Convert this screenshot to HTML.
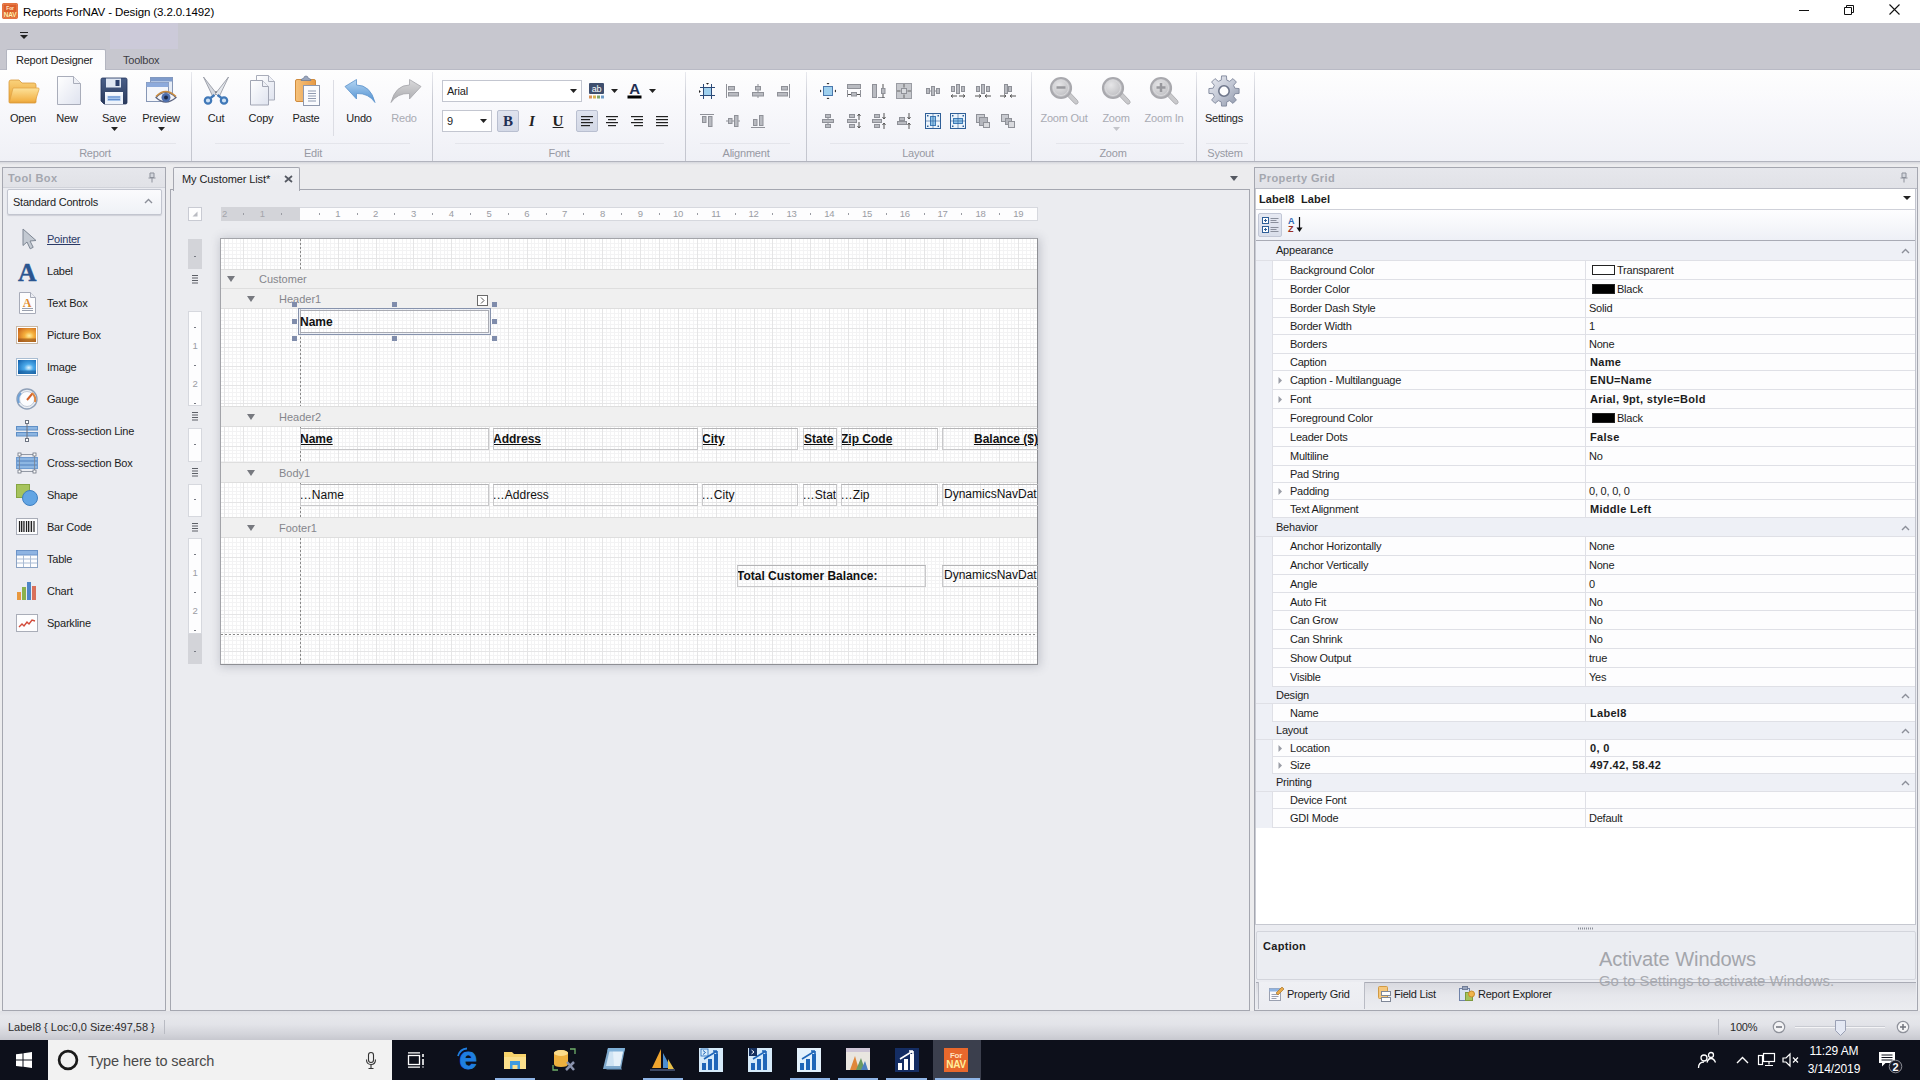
<!DOCTYPE html>
<html><head><meta charset="utf-8"><title>Reports ForNAV - Design</title>
<style>
*{box-sizing:border-box;margin:0;padding:0}
html,body{width:1920px;height:1080px;overflow:hidden;background:#ececee}
body{position:relative;font-family:"Liberation Sans",sans-serif;font-size:11px;color:#1e1e1e;letter-spacing:-0.22px}
div,svg{position:absolute}
svg{overflow:visible}
.t{height:16px;line-height:16px;white-space:nowrap}
.c{text-align:center}
.g{color:#9b9da6}
.b{font-weight:bold;letter-spacing:.3px}
.ar{font-family:"Liberation Sans",sans-serif;font-size:12px;letter-spacing:0;color:#111}
.bh{background:#f0f0f0;border-top:1px solid #dedede;border-bottom:1px solid #dedede}
.grid{background-color:#fff;background-image:linear-gradient(to right,#e3e3e5 1px,transparent 1px),linear-gradient(to bottom,#e3e3e5 1px,transparent 1px),linear-gradient(to right,#f3f3f5 1px,transparent 1px),linear-gradient(to bottom,#f3f3f5 1px,transparent 1px);background-size:18.9px 18.9px,18.9px 18.9px,3.78px 3.78px,3.78px 3.78px}
.fld{border:1px solid #c8c8ca;border-top-color:#b4b4b6}
.ar i{font-style:normal;letter-spacing:.6px}
.row{background:#fdfdfe;border-bottom:1px solid #dfe0e6}
.cat{background:#eef0f6;border-bottom:1px solid #dfe0e6}
</style></head>
<body>
<div style="left:0px;top:0px;width:1920px;height:23px;background:#fff"></div>
<svg style="left:2px;top:3px;" width="16" height="16" viewBox="0 0 16 16"><rect x="0" y="0" width="16" height="16" rx="2" fill="#dc5e2b"/><rect x="1" y="1" width="14" height="14" rx="1.5" fill="none" stroke="#ec8a58" stroke-width="1"/><text x="8" y="7" font-size="5" font-weight="bold" fill="#ffe9c8" text-anchor="middle" font-family="Liberation Sans,sans-serif">For</text><text x="8" y="13.5" font-size="6.5" font-weight="bold" fill="#fff3b0" text-anchor="middle" font-family="Liberation Sans,sans-serif">NAV</text></svg>
<div class="t" style="left:23px;top:3.5px;font-size:11.5px;letter-spacing:-0.1px;color:#000">Reports ForNAV - Design (3.2.0.1492)</div>
<svg style="left:1790px;top:-1px;" width="130" height="23" viewBox="0 0 130 23"><path d="M9 11.5H19" stroke="#111" stroke-width="1"/><path d="M54.5 8.5h7v7h-7zM56.5 8.5v-2h7v7h-2" fill="none" stroke="#111" stroke-width="1"/><path d="M99.5 5.5l10 10M109.5 5.5l-10 10" stroke="#111" stroke-width="1.1"/></svg>
<div style="left:0px;top:23px;width:1920px;height:46px;background:#c7c7cf"></div>
<div style="left:110px;top:23px;width:68px;height:26px;background:#cdcbdb;opacity:.8"></div>
<svg style="left:19px;top:31px;" width="10" height="8" viewBox="0 0 10 8"><path d="M1 1.5h8" stroke="#222" stroke-width="1"/><path d="M1 4h8l-4 4z" fill="#222"/></svg>
<div style="left:0px;top:69px;width:1920px;height:93px;background:linear-gradient(#fefefe 0%,#f9f9fc 35%,#eff0f6 100%);border-top:1px solid #b9bac5;border-bottom:1px solid #b2b4be"></div>
<div style="left:0px;top:162px;width:1920px;height:3px;background:linear-gradient(#d6d7dd,#ececee)"></div>
<div style="left:6px;top:49px;width:100px;height:21px;background:linear-gradient(#fbfbfd,#fdfdfe);border:1px solid #b3b5c0;border-bottom:none;border-radius:2px 2px 0 0"></div>
<div class="t" style="left:16px;top:52px;color:#222">Report Designer</div>
<div class="t" style="left:123px;top:52px;color:#3c3c44">Toolbox</div>
<div style="left:191px;top:72px;width:1px;height:89px;background:linear-gradient(#e9eaef,#c9cbd3 30%,#c4c6cf)"></div>
<div style="left:432px;top:72px;width:1px;height:89px;background:linear-gradient(#e9eaef,#c9cbd3 30%,#c4c6cf)"></div>
<div style="left:685px;top:72px;width:1px;height:89px;background:linear-gradient(#e9eaef,#c9cbd3 30%,#c4c6cf)"></div>
<div style="left:806px;top:72px;width:1px;height:89px;background:linear-gradient(#e9eaef,#c9cbd3 30%,#c4c6cf)"></div>
<div style="left:1031px;top:72px;width:1px;height:89px;background:linear-gradient(#e9eaef,#c9cbd3 30%,#c4c6cf)"></div>
<div style="left:1196px;top:72px;width:1px;height:89px;background:linear-gradient(#e9eaef,#c9cbd3 30%,#c4c6cf)"></div>
<div style="left:1254px;top:72px;width:1px;height:89px;background:linear-gradient(#e9eaef,#c9cbd3 30%,#c4c6cf)"></div>
<div class="t c" style="left:-5px;top:145px;width:200px;color:#9799a3">Report</div>
<div style="left:30px;top:143px;width:146px;height:1px;background:#e4e5eb"></div>
<div class="t c" style="left:213px;top:145px;width:200px;color:#9799a3">Edit</div>
<div style="left:215px;top:143px;width:195px;height:1px;background:#e4e5eb"></div>
<div class="t c" style="left:459px;top:145px;width:200px;color:#9799a3">Font</div>
<div style="left:455px;top:143px;width:209px;height:1px;background:#e4e5eb"></div>
<div class="t c" style="left:646px;top:145px;width:200px;color:#9799a3">Alignment</div>
<div style="left:700px;top:143px;width:90px;height:1px;background:#e4e5eb"></div>
<div class="t c" style="left:818px;top:145px;width:200px;color:#9799a3">Layout</div>
<div style="left:830px;top:143px;width:180px;height:1px;background:#e4e5eb"></div>
<div class="t c" style="left:1013px;top:145px;width:200px;color:#9799a3">Zoom</div>
<div style="left:1056px;top:143px;width:128px;height:1px;background:#e4e5eb"></div>
<div class="t c" style="left:1125px;top:145px;width:200px;color:#9799a3">System</div>
<div style="left:1206px;top:143px;width:42px;height:1px;background:#e4e5eb"></div>
<svg width="0" height="0" style="left:0;top:0"><defs>
<linearGradient id="gFold" x1="0" y1="0" x2="0" y2="1"><stop offset="0" stop-color="#f9d27c"/><stop offset="1" stop-color="#ea9c28"/></linearGradient>
<linearGradient id="gFold2" x1="0" y1="0" x2="0" y2="1"><stop offset="0" stop-color="#fde29a"/><stop offset="1" stop-color="#f2ae40"/></linearGradient>
<linearGradient id="gPage" x1="0" y1="0" x2="1" y2="1"><stop offset="0" stop-color="#ffffff"/><stop offset="1" stop-color="#dfe3ef"/></linearGradient>
<linearGradient id="gFlop" x1="0" y1="0" x2="0" y2="1"><stop offset="0" stop-color="#4a5f88"/><stop offset="1" stop-color="#2a3a5c"/></linearGradient>
<linearGradient id="gBlue" x1="0" y1="0" x2="0" y2="1"><stop offset="0" stop-color="#b5d6f3"/><stop offset="1" stop-color="#4f8fd0"/></linearGradient>
<linearGradient id="gGrey" x1="0" y1="0" x2="0" y2="1"><stop offset="0" stop-color="#d9d9db"/><stop offset="1" stop-color="#a9a9ad"/></linearGradient>
<linearGradient id="gGear" x1="0" y1="0" x2="1" y2="1"><stop offset="0" stop-color="#eceef4"/><stop offset=".5" stop-color="#c3c8d5"/><stop offset="1" stop-color="#8d95a9"/></linearGradient>
<linearGradient id="gClip" x1="0" y1="0" x2="1" y2="0"><stop offset="0" stop-color="#f6c27c"/><stop offset="1" stop-color="#e79a45"/></linearGradient>
<radialGradient id="gLens" cx=".4" cy=".35" r=".7"><stop offset="0" stop-color="#e6e6e8"/><stop offset="1" stop-color="#b9b9bd"/></radialGradient>
<radialGradient id="gPic" cx=".62" cy=".55" r=".75"><stop offset="0" stop-color="#fff0a0"/><stop offset=".35" stop-color="#f6b03c"/><stop offset="1" stop-color="#c9641c"/></radialGradient><radialGradient id="gImg" cx=".6" cy=".55" r=".75"><stop offset="0" stop-color="#e0f6ff"/><stop offset=".35" stop-color="#4aa9ea"/><stop offset="1" stop-color="#1565b0"/></radialGradient>
</defs></svg>
<svg style="left:8px;top:75px;" width="32" height="32" viewBox="0 0 32 32"><path d="M1 7q0-2 2-2h8l3 3h12q2 0 2 2v17q0 1-1 1H2q-1 0-1-1z" fill="url(#gFold)" stroke="#d99a3c" stroke-width=".8"/><path d="M5 13h25q1.5 0 1 1.5l-3.5 11q-.4 1.5-2 1.5H1.5z" fill="url(#gFold2)" stroke="#e2a548" stroke-width=".8"/></svg>
<div class="t c" style="left:-77px;top:110px;width:200px;color:#222">Open</div>
<svg style="left:51px;top:75px;" width="32" height="32" viewBox="0 0 32 32"><path d="M6.5 1.5h16l7 7v21h-23z" fill="url(#gPage)" stroke="#a9adba" stroke-width="1"/><path d="M22.5 1.5v7h7" fill="#eef0f6" stroke="#a9adba" stroke-width="1"/></svg>
<div class="t c" style="left:-33px;top:110px;width:200px;color:#222">New</div>
<svg style="left:98px;top:75px;" width="32" height="32" viewBox="0 0 32 32"><path d="M3 4.5q0-1.500 1.500-1.500h23q1.500 0 1.500 1.500v23q0 1.500-1.500 1.500h-21.500l-3-3z" fill="url(#gFlop)" stroke="#22325a" stroke-width=".8"/><rect x="8" y="3.500" width="15" height="9" fill="#dfe6f2"/><rect x="17.500" y="5" width="4" height="6" fill="#2b3f6b"/><rect x="7" y="17" width="18" height="12" fill="#eef3fb"/><rect x="7" y="17" width="18" height="3" fill="#f7f9fd"/><path d="M10 22h12M10 24.500h12" stroke="#5b7bb4" stroke-width="1.200"/><rect x="9.500" y="21" width="13" height="5" fill="#6b9fe0" opacity=".55"/></svg>
<div class="t c" style="left:14px;top:110px;width:200px;color:#222">Save</div>
<svg style="left:111px;top:127px;" width="7" height="4" viewBox="0 0 7 4"><path d="M0 0h7l-3.5 4z" fill="#222"/></svg>
<svg style="left:145px;top:75px;" width="32" height="32" viewBox="0 0 32 32"><rect x="5.500" y="2.500" width="22" height="19" fill="#e6ecf6" stroke="#8696b5"/><rect x="5.500" y="2.500" width="22" height="4" fill="#7f9bcb"/><rect x="1.500" y="7.500" width="22" height="19" fill="#f4f6fb" stroke="#8696b5"/><rect x="1.500" y="7.500" width="22" height="4.500" fill="#8daadb"/><path d="M11 22.500q9.500-10 20 0q-10.500 9-20 0z" fill="#f4f4f8" stroke="#5b6480" stroke-width="1.200"/><path d="M11 21.500q9.500-10 20 0" fill="none" stroke="#c98b3e" stroke-width="1.500"/><circle cx="21" cy="22.500" r="4.500" fill="#4d6fae"/><circle cx="21" cy="22.500" r="2" fill="#1c2a4a"/></svg>
<div class="t c" style="left:61px;top:110px;width:200px;color:#222">Preview</div>
<svg style="left:158px;top:127px;" width="7" height="4" viewBox="0 0 7 4"><path d="M0 0h7l-3.5 4z" fill="#222"/></svg>
<svg style="left:200px;top:75px;" width="32" height="32" viewBox="0 0 32 32"><path d="M3.500 2l13 16.500-3.500 3.500z" fill="#d6d9e0" stroke="#8e929d" stroke-width=".8"/><path d="M28.500 2l-13 16.500 3.500 3.500z" fill="#e4e7ec" stroke="#8e929d" stroke-width=".8"/><circle cx="16" cy="17" r="1" fill="#7b7f8a"/><circle cx="8" cy="25.500" r="3.200" fill="#cfe2f5" stroke="#4078b8" stroke-width="2.200"/><circle cx="24" cy="25.500" r="3.200" fill="#cfe2f5" stroke="#4078b8" stroke-width="2.200"/><path d="M10.500 23l4-3M21.500 23l-4-3" stroke="#4078b8" stroke-width="2.200"/></svg>
<div class="t c" style="left:116px;top:110px;width:200px;color:#222">Cut</div>
<svg style="left:245px;top:75px;" width="32" height="32" viewBox="0 0 32 32"><path d="M11.500 .500h12l6 6v18.500h-18z" fill="url(#gPage)" stroke="#a9adba"/><path d="M23.500 .500v6h6" fill="#eef0f6" stroke="#a9adba"/><path d="M5.500 5.500h12l6 6v18.500h-18z" fill="url(#gPage)" stroke="#a2a6b4"/><path d="M17.500 5.500v6h6" fill="#eef0f6" stroke="#a2a6b4"/></svg>
<div class="t c" style="left:161px;top:110px;width:200px;color:#222">Copy</div>
<svg style="left:292px;top:75px;" width="32" height="32" viewBox="0 0 32 32"><rect x="3.500" y="4.500" width="20" height="22" rx="1.500" fill="url(#gClip)" stroke="#d08c3e"/><path d="M9 5.500q0-2 2.500-2q.5-2.500 2.500-2.500t2.500 2.500q2.500 0 2.500 2z" fill="#9aa6bd" stroke="#6f7c96" stroke-width=".8"/><rect x="11.500" y="10.500" width="16" height="20" fill="#fafbfe" stroke="#8f98ad"/><path d="M16 16h8M16 18.500h8M16 21h8M16 23.500h8M16 26h8" stroke="#8f9ab0" stroke-width="1"/></svg>
<div class="t c" style="left:206px;top:110px;width:200px;color:#222">Paste</div>
<div style="left:333px;top:80px;width:1px;height:56px;background:#dcdde4"></div>
<svg style="left:344px;top:76px;" width="32" height="32" viewBox="0 0 32 32"><path d="M1 10.500L12.500 3.500v5.500q14 0 18.500 17.500q-6.500-9.500-18.500-9v5.500z" fill="url(#gBlue)" stroke="#5d93cc" stroke-width=".8"/></svg>
<div class="t c" style="left:259px;top:110px;width:200px;color:#222">Undo</div>
<svg style="left:390px;top:76px;" width="32" height="32" viewBox="0 0 32 32"><g transform="translate(32,0) scale(-1,1)"><path d="M1 10.500L12.500 3.500v5.500q14 0 18.500 17.500q-6.500-9.500-18.500-9v5.500z" fill="url(#gGrey)" stroke="#a5a5aa" stroke-width=".8"/></g></svg>
<div class="t c" style="left:304px;top:110px;width:200px;color:#a9abb3">Redo</div>
<svg style="left:1048px;top:75px;" width="32" height="32" viewBox="0 0 32 32"><path d="M18 19.500l3-3 8.500 9q1.500 2-.200 3.300q-1.600 1-2.900-.500z" fill="#c9c9cc" stroke="#a4a4a8" stroke-width=".8"/><circle cx="13" cy="13" r="10" fill="url(#gLens)" stroke="#a9a9ae" stroke-width="2.200"/><circle cx="13" cy="13" r="7.500" fill="none" stroke="#d9d9dc" stroke-width="1"/><path d="M8.500 12.500h9" stroke="#98989d" stroke-width="2.500"/></svg>
<div class="t c" style="left:964px;top:110px;width:200px;color:#a9abb3">Zoom Out</div>
<svg style="left:1100px;top:75px;" width="32" height="32" viewBox="0 0 32 32"><path d="M18 19.500l3-3 8.500 9q1.500 2-.200 3.300q-1.600 1-2.900-.500z" fill="#c9c9cc" stroke="#a4a4a8" stroke-width=".8"/><circle cx="13" cy="13" r="10" fill="url(#gLens)" stroke="#a9a9ae" stroke-width="2.200"/><circle cx="13" cy="13" r="7.500" fill="none" stroke="#d9d9dc" stroke-width="1"/></svg>
<div class="t c" style="left:1016px;top:110px;width:200px;color:#a9abb3">Zoom</div>
<svg style="left:1113px;top:127px;" width="7" height="4" viewBox="0 0 7 4"><path d="M0 0h7l-3.5 4z" fill="#c4c5cb"/></svg>
<svg style="left:1148px;top:75px;" width="32" height="32" viewBox="0 0 32 32"><path d="M18 19.500l3-3 8.500 9q1.500 2-.200 3.300q-1.600 1-2.900-.500z" fill="#c9c9cc" stroke="#a4a4a8" stroke-width=".8"/><circle cx="13" cy="13" r="10" fill="url(#gLens)" stroke="#a9a9ae" stroke-width="2.200"/><circle cx="13" cy="13" r="7.500" fill="none" stroke="#d9d9dc" stroke-width="1"/><path d="M8.500 12.500h9M13 8v9" stroke="#98989d" stroke-width="2.500"/></svg>
<div class="t c" style="left:1064px;top:110px;width:200px;color:#a9abb3">Zoom In</div>
<svg style="left:1208px;top:75px;" width="32" height="32" viewBox="0 0 32 32"><polygon points="13.23,5.15 13.56,0.90 18.44,0.90 18.77,5.15 21.71,6.37 24.96,3.60 28.40,7.04 25.63,10.29 26.85,13.23 31.10,13.56 31.10,18.44 26.85,18.77 25.63,21.71 28.40,24.96 24.96,28.40 21.71,25.63 18.77,26.85 18.44,31.10 13.56,31.10 13.23,26.85 10.29,25.63 7.04,28.40 3.60,24.96 6.37,21.71 5.15,18.77 0.90,18.44 0.90,13.56 5.15,13.23 6.37,10.29 3.60,7.04 7.04,3.60 10.29,6.37" fill="url(#gGear)" stroke="#7f879b" stroke-width=".9" stroke-linejoin="round"/><circle cx="16" cy="16" r="5.200" fill="#fdfdfe" stroke="#6f778b" stroke-width="1.600"/></svg>
<div class="t c" style="left:1124px;top:110px;width:200px;color:#222">Settings</div>
<div style="left:442px;top:80px;width:140px;height:22px;background:#fff;border:1px solid #c3c6d0"></div>
<div class="t" style="left:447px;top:83px;color:#222">Arial</div>
<svg style="left:570px;top:89px;" width="7" height="4" viewBox="0 0 7 4"><path d="M0 0h7l-3.500 4z" fill="#222"/></svg>
<div style="left:442px;top:110px;width:50px;height:22px;background:#fff;border:1px solid #c3c6d0"></div>
<div class="t" style="left:447px;top:113px;color:#222">9</div>
<svg style="left:480px;top:119px;" width="7" height="4" viewBox="0 0 7 4"><path d="M0 0h7l-3.500 4z" fill="#222"/></svg>
<svg style="left:589px;top:83px;" width="16" height="16" viewBox="0 0 16 16"><rect x="0" y="0" width="15" height="11" rx="1" fill="#3f4f6e"/><text x="7.500" y="8.500" font-size="9" fill="#fff" text-anchor="middle" font-family="Liberation Sans,sans-serif">ab</text><rect x="0" y="12.500" width="3" height="3" fill="#d9935a"/><rect x="4" y="12.500" width="3" height="3" fill="#d8b24f"/><rect x="8" y="12.500" width="3" height="3" fill="#7fa56a"/><rect x="12" y="12.500" width="3" height="3" fill="#6d9bc6"/></svg>
<svg style="left:611px;top:89px;" width="7" height="4" viewBox="0 0 7 4"><path d="M0 0h7l-3.500 4z" fill="#222"/></svg>
<svg style="left:627px;top:82px;" width="16" height="18" viewBox="0 0 16 18"><text x="7.500" y="12" font-size="15" font-weight="bold" fill="#1f2f52" text-anchor="middle" font-family="Liberation Sans,sans-serif">A</text><rect x="0.500" y="13.500" width="14" height="3" fill="#000"/></svg>
<svg style="left:649px;top:89px;" width="7" height="4" viewBox="0 0 7 4"><path d="M0 0h7l-3.500 4z" fill="#222"/></svg>
<div style="left:497px;top:110px;width:22px;height:22px;background:linear-gradient(#dfe3ee,#d3d8e6);border:1px solid #b9bfd0;border-radius:2px"></div>
<div class="t c" style="left:497px;top:113px;width:22px;font-family:'Liberation Serif',serif;font-weight:bold;font-size:15px;color:#1f2f55;letter-spacing:0">B</div>
<div class="t c" style="left:521px;top:113px;width:22px;font-family:'Liberation Serif',serif;font-weight:bold;font-style:italic;font-size:15px;color:#222;letter-spacing:0">I</div>
<div class="t c" style="left:547px;top:113px;width:22px;font-family:'Liberation Serif',serif;font-weight:bold;font-size:15px;color:#222;text-decoration:underline;letter-spacing:0">U</div>
<div style="left:576px;top:110px;width:22px;height:22px;background:linear-gradient(#dfe3ee,#d3d8e6);border:1px solid #b9bfd0;border-radius:2px"></div>
<svg style="left:581px;top:116px;" width="12" height="11" viewBox="0 0 12 11"><rect x="0" y="0" width="12" height="1.200" fill="#222"/><rect x="0" y="3" width="9" height="1.200" fill="#222"/><rect x="0" y="6" width="12" height="1.200" fill="#222"/><rect x="0" y="9" width="9" height="1.200" fill="#222"/></svg>
<svg style="left:606px;top:116px;" width="12" height="11" viewBox="0 0 12 11"><rect x="0" y="0" width="12" height="1.200" fill="#222"/><rect x="2" y="3" width="8" height="1.200" fill="#222"/><rect x="0" y="6" width="12" height="1.200" fill="#222"/><rect x="2" y="9" width="8" height="1.200" fill="#222"/></svg>
<svg style="left:631px;top:116px;" width="12" height="11" viewBox="0 0 12 11"><rect x="0" y="0" width="12" height="1.200" fill="#222"/><rect x="3" y="3" width="9" height="1.200" fill="#222"/><rect x="0" y="6" width="12" height="1.200" fill="#222"/><rect x="3" y="9" width="9" height="1.200" fill="#222"/></svg>
<svg style="left:656px;top:116px;" width="12" height="11" viewBox="0 0 12 11"><rect x="0" y="0" width="12" height="1.200" fill="#222"/><rect x="0" y="3" width="12" height="1.200" fill="#222"/><rect x="0" y="6" width="12" height="1.200" fill="#222"/><rect x="0" y="9" width="12" height="1.200" fill="#222"/></svg>
<svg style="left:699px;top:83px;" width="16" height="16" viewBox="0 0 16 16"><rect x="4.500" y="4.500" width="8" height="8" fill="#9fd0ee"/><path d="M4.500 1v15M12.500 1v15M1 4.500h15M1 12.500h15" stroke="#2b4a78" stroke-width="1" fill="none"/><path d="M7 0h3l-1.500 1.800zM0 7v3l1.800-1.500z" fill="#222"/></svg>
<svg style="left:725px;top:83px;" width="16" height="16" viewBox="0 0 16 16"><path d="M1.500 1v14" stroke="#8f9198" stroke-width="1" fill="none"/><rect x="3.5" y="3.5" width="6" height="3.5" fill="#b9bbc1" stroke="#8f9198" stroke-width="1"/><rect x="3.5" y="9.5" width="10" height="3.5" fill="#b9bbc1" stroke="#8f9198" stroke-width="1"/></svg>
<svg style="left:750px;top:83px;" width="16" height="16" viewBox="0 0 16 16"><path d="M8 1v14" stroke="#8f9198" stroke-width="1" fill="none"/><rect x="5.5" y="3.5" width="5" height="3.5" fill="#b9bbc1" stroke="#8f9198" stroke-width="1"/><rect x="2.5" y="9.5" width="11" height="3.5" fill="#b9bbc1" stroke="#8f9198" stroke-width="1"/></svg>
<svg style="left:775px;top:83px;" width="16" height="16" viewBox="0 0 16 16"><path d="M14.500 1v14" stroke="#8f9198" stroke-width="1" fill="none"/><rect x="6.5" y="3.5" width="6" height="3.5" fill="#b9bbc1" stroke="#8f9198" stroke-width="1"/><rect x="2.5" y="9.5" width="10" height="3.5" fill="#b9bbc1" stroke="#8f9198" stroke-width="1"/></svg>
<svg style="left:699px;top:113px;" width="16" height="16" viewBox="0 0 16 16"><path d="M1 1.500h14" stroke="#8f9198" stroke-width="1" fill="none"/><rect x="3.5" y="3.5" width="3.5" height="6" fill="#b9bbc1" stroke="#8f9198" stroke-width="1"/><rect x="9.5" y="3.5" width="3.5" height="10" fill="#b9bbc1" stroke="#8f9198" stroke-width="1"/></svg>
<svg style="left:725px;top:113px;" width="16" height="16" viewBox="0 0 16 16"><path d="M1 8h14" stroke="#8f9198" stroke-width="1" fill="none"/><rect x="3.5" y="5.5" width="3.5" height="5" fill="#b9bbc1" stroke="#8f9198" stroke-width="1"/><rect x="9.5" y="2.5" width="3.5" height="11" fill="#b9bbc1" stroke="#8f9198" stroke-width="1"/></svg>
<svg style="left:750px;top:113px;" width="16" height="16" viewBox="0 0 16 16"><path d="M1 14.500h14" stroke="#8f9198" stroke-width="1" fill="none"/><rect x="3.5" y="6.5" width="3.5" height="6" fill="#b9bbc1" stroke="#8f9198" stroke-width="1"/><rect x="9.5" y="2.5" width="3.5" height="10" fill="#b9bbc1" stroke="#8f9198" stroke-width="1"/></svg>
<svg style="left:820px;top:83px;" width="16" height="16" viewBox="0 0 16 16"><rect x="3.500" y="3.500" width="9" height="9" fill="#9fd0ee" stroke="#4a78ad" stroke-width="1"/><path d="M6.500 0h3l-1.500 1.500zM6.500 16h3l-1.500-1.500zM0 6.500v3l1.500-1.500zM16 6.500v3l-1.500-1.500z" fill="#222"/></svg>
<svg style="left:846px;top:83px;" width="16" height="16" viewBox="0 0 16 16"><rect x="1.5" y="1.5" width="13" height="4" fill="#b9bbc1" stroke="#8f9198" stroke-width="1"/><path d="M1.500 7v7M14.500 7v7" stroke="#8f9198" stroke-width="1" fill="none"/><rect x="5.5" y="9.5" width="5" height="3.5" fill="#b9bbc1" stroke="#8f9198" stroke-width="1"/><path d="M2 11.500h3M14 11.500h-3" stroke="#555" stroke-width="1" fill="none"/></svg>
<svg style="left:871px;top:83px;" width="16" height="16" viewBox="0 0 16 16"><rect x="1.5" y="1.5" width="4" height="13" fill="#b9bbc1" stroke="#8f9198" stroke-width="1"/><path d="M7 14.500h7" stroke="#8f9198" stroke-width="1" fill="none"/><rect x="10.5" y="5.5" width="3.5" height="5" fill="#b9bbc1" stroke="#8f9198" stroke-width="1"/><path d="M12 1v4M12 15v-4" stroke="#555" stroke-width="1" fill="none"/></svg>
<svg style="left:896px;top:83px;" width="16" height="16" viewBox="0 0 16 16"><rect x="0.5" y="0.5" width="15" height="15" fill="#c6c8cd" stroke="#9a9ca3" stroke-width="1"/><rect x="5.5" y="5.5" width="5" height="5" fill="#d8dade" stroke="#8f9198" stroke-width="1"/><path d="M8 1v3.500M8 15v-3.500M1 8h3.500M15 8h-3.500" stroke="#666" stroke-width="1" fill="none"/></svg>
<svg style="left:925px;top:83px;" width="16" height="16" viewBox="0 0 16 16"><path d="M1 8h14" stroke="#8f9198" stroke-width="1" fill="none"/><rect x="1.5" y="5.5" width="3" height="5" fill="#b9bbc1" stroke="#8f9198" stroke-width="1"/><rect x="6.5" y="3.5" width="3" height="9" fill="#b9bbc1" stroke="#8f9198" stroke-width="1"/><rect x="11.5" y="5.5" width="3" height="5" fill="#b9bbc1" stroke="#8f9198" stroke-width="1"/></svg>
<svg style="left:950px;top:83px;" width="16" height="16" viewBox="0 0 16 16"><rect x="1.5" y="3.5" width="3" height="5" fill="#b9bbc1" stroke="#8f9198" stroke-width="1"/><rect x="6.5" y="1.5" width="3" height="9" fill="#b9bbc1" stroke="#8f9198" stroke-width="1"/><rect x="11.5" y="3.5" width="3" height="5" fill="#b9bbc1" stroke="#8f9198" stroke-width="1"/><path d="M1 13h6M15 13h-6M3 11.500l-2 1.500 2 1.500M13 11.500l2 1.500-2 1.500" stroke="#555" stroke-width="1" fill="none"/></svg>
<svg style="left:975px;top:83px;" width="16" height="16" viewBox="0 0 16 16"><rect x="1.5" y="3.5" width="3" height="5" fill="#b9bbc1" stroke="#8f9198" stroke-width="1"/><rect x="6.5" y="1.5" width="3" height="9" fill="#b9bbc1" stroke="#8f9198" stroke-width="1"/><rect x="11.5" y="3.5" width="3" height="5" fill="#b9bbc1" stroke="#8f9198" stroke-width="1"/><path d="M0 13h6M16 13h-6M4 11.500l2 1.500-2 1.500M12 11.500l-2 1.500 2 1.500" stroke="#555" stroke-width="1" fill="none"/></svg>
<svg style="left:1000px;top:83px;" width="16" height="16" viewBox="0 0 16 16"><rect x="4.5" y="1.5" width="3" height="9" fill="#b9bbc1" stroke="#8f9198" stroke-width="1"/><rect x="8.5" y="3.5" width="3" height="5" fill="#b9bbc1" stroke="#8f9198" stroke-width="1"/><path d="M0 13h6M16 13h-6M4 11.500l2 1.500-2 1.500M12 11.500l-2 1.500 2 1.500" stroke="#555" stroke-width="1" fill="none"/></svg>
<svg style="left:820px;top:113px;" width="16" height="16" viewBox="0 0 16 16"><path d="M8 1v14" stroke="#8f9198" stroke-width="1" fill="none"/><rect x="5.5" y="1.5" width="5" height="3" fill="#b9bbc1" stroke="#8f9198" stroke-width="1"/><rect x="2.5" y="6.5" width="11" height="3" fill="#b9bbc1" stroke="#8f9198" stroke-width="1"/><rect x="5.5" y="11.5" width="5" height="3" fill="#b9bbc1" stroke="#8f9198" stroke-width="1"/></svg>
<svg style="left:846px;top:113px;" width="16" height="16" viewBox="0 0 16 16"><rect x="3.5" y="1.5" width="5" height="3" fill="#b9bbc1" stroke="#8f9198" stroke-width="1"/><rect x="1.5" y="6.5" width="9" height="3" fill="#b9bbc1" stroke="#8f9198" stroke-width="1"/><rect x="3.5" y="11.5" width="5" height="3" fill="#b9bbc1" stroke="#8f9198" stroke-width="1"/><path d="M13 1v6M13 15v-6M11.500 3l1.500-2 1.500 2M11.500 13l1.500 2 1.500-2" stroke="#555" stroke-width="1" fill="none"/></svg>
<svg style="left:871px;top:113px;" width="16" height="16" viewBox="0 0 16 16"><rect x="3.5" y="1.5" width="5" height="3" fill="#b9bbc1" stroke="#8f9198" stroke-width="1"/><rect x="1.5" y="6.5" width="9" height="3" fill="#b9bbc1" stroke="#8f9198" stroke-width="1"/><rect x="3.5" y="11.5" width="5" height="3" fill="#b9bbc1" stroke="#8f9198" stroke-width="1"/><path d="M13 0v6M13 16v-6M11.500 4l1.500 2 1.500-2M11.500 12l1.500-2 1.500 2" stroke="#555" stroke-width="1" fill="none"/></svg>
<svg style="left:896px;top:113px;" width="16" height="16" viewBox="0 0 16 16"><rect x="3.5" y="4.5" width="5" height="3" fill="#b9bbc1" stroke="#8f9198" stroke-width="1"/><rect x="1.5" y="8.5" width="9" height="3" fill="#b9bbc1" stroke="#8f9198" stroke-width="1"/><path d="M13 0v6M13 16v-6M11.500 4l1.500 2 1.500-2M11.500 12l1.500-2 1.500 2" stroke="#555" stroke-width="1" fill="none"/></svg>
<svg style="left:925px;top:113px;" width="16" height="16" viewBox="0 0 16 16"><rect x="0.5" y="0.5" width="15" height="15" fill="#eaf3fb" stroke="#2f5f98" stroke-width="1"/><rect x="5.5" y="3.5" width="5" height="9" fill="#8ec3ea" stroke="#3e7ab5" stroke-width="1"/><path d="M8 1v14M1 8h14" stroke="#2f5f98" stroke-width="0.600" fill="none"/><path d="M2 2h1.500v1.500h-1.500zM12.500 2h1.500v1.500h-1.500zM2 12.500h1.500v1.500h-1.500zM12.500 12.500h1.500v1.500h-1.500z" fill="#2f5f98"/></svg>
<svg style="left:950px;top:113px;" width="16" height="16" viewBox="0 0 16 16"><rect x="0.5" y="0.5" width="15" height="15" fill="#eaf3fb" stroke="#2f5f98" stroke-width="1"/><rect x="3.5" y="5.5" width="9" height="5" fill="#8ec3ea" stroke="#3e7ab5" stroke-width="1"/><path d="M8 1v14M1 8h14" stroke="#2f5f98" stroke-width="0.600" fill="none"/><path d="M2 2h1.500v1.500h-1.500zM12.500 2h1.500v1.500h-1.500zM2 12.500h1.500v1.500h-1.500zM12.500 12.500h1.500v1.500h-1.500z" fill="#2f5f98"/></svg>
<svg style="left:975px;top:113px;" width="16" height="16" viewBox="0 0 16 16"><rect x="1.5" y="1.5" width="8" height="8" fill="#c9cbd1" stroke="#8f9198" stroke-width="1"/><rect x="4.5" y="4.5" width="8" height="8" fill="#b4b6bd" stroke="#8f9198" stroke-width="1"/><rect x="8.5" y="9.5" width="6" height="5" fill="#d9dade" stroke="#8f9198" stroke-width="1"/></svg>
<svg style="left:1000px;top:113px;" width="16" height="16" viewBox="0 0 16 16"><rect x="1.5" y="1.5" width="7" height="7" fill="#c9cbd1" stroke="#8f9198" stroke-width="1"/><rect x="5.5" y="5.5" width="6" height="6" fill="#b4b6bd" stroke="#8f9198" stroke-width="1"/><rect x="8.5" y="8.5" width="6" height="6" fill="#d9dade" stroke="#8f9198" stroke-width="1"/></svg>
<div style="left:2px;top:167px;width:164px;height:844px;background:#ebecf1;border:1px solid #a5a7b0"></div>
<div style="left:3px;top:168px;width:162px;height:20px;background:linear-gradient(#e6e7ec,#e1e2e7);border-bottom:1px solid #d0d2d9"></div>
<div class="t" style="left:8px;top:170px;font-weight:bold;color:#a4a7af;letter-spacing:.4px">Tool Box</div>
<svg style="left:148px;top:173px;" width="8" height="10" viewBox="0 0 8 10"><path d="M2 0h4v4.500h-4zM0.500 5h7M4 5v4.500" stroke="#8d919b" stroke-width="1" fill="#d3d6dd"/></svg>
<div style="left:7px;top:189px;width:155px;height:26px;background:linear-gradient(#fbfbfd,#eff1f6);border:1px solid #c2c5cf;border-radius:2px;box-shadow:0 1px 1px rgba(120,125,140,.25)"></div>
<div class="t" style="left:13px;top:194px;color:#1c1c1c">Standard Controls</div>
<svg style="left:144px;top:198px;" width="9" height="6" viewBox="0 0 9 6"><path d="M1 5l3.500-3.500 3.500 3.500" stroke="#8c8f99" stroke-width="1.400" fill="none"/></svg>
<svg style="left:16px;top:228px;" width="22" height="22" viewBox="0 0 22 22"><path d="M7 1l0 16.500 4-3.500 3.200 6.800 3-1.500-3.200-6.300 6-.500z" fill="#c3c9d2" stroke="#7e8794" stroke-width="1"/></svg>
<div class="t" style="left:47px;top:231px;color:#2b3a66;text-decoration:underline">Pointer</div>
<svg style="left:16px;top:261px;" width="22" height="22" viewBox="0 0 22 22"><text x="11" y="20" font-size="25.500" font-weight="bold" fill="#2a5590" stroke="#2a5590" stroke-width=".5" text-anchor="middle" font-family="Liberation Serif,serif">A</text></svg>
<div class="t" style="left:47px;top:263px;color:#1c1c1c">Label</div>
<svg style="left:16px;top:292px;" width="22" height="22" viewBox="0 0 22 22"><path d="M3.500 .500h11l5 5v16h-16z" fill="#fdfdfe" stroke="#a7abb8"/><path d="M14.500 .500v5h5" fill="#eceef4" stroke="#a7abb8"/><text x="11" y="14.500" font-size="12" font-weight="bold" fill="#e08a2e" text-anchor="middle" font-family="Liberation Serif,serif">A</text><path d="M6 16.500h11M6 18.500h11" stroke="#9aa0ae" stroke-width="1"/></svg>
<div class="t" style="left:47px;top:295px;color:#1c1c1c">Text Box</div>
<svg style="left:16px;top:324px;" width="22" height="22" viewBox="0 0 22 22"><rect x="0.500" y="2.500" width="21" height="17" fill="#fff" stroke="#c9b9a6"/><rect x="2" y="4" width="18" height="14" fill="url(#gPic)"/><rect x="2" y="14.500" width="18" height="3.500" fill="#8a4a18" opacity=".55"/></svg>
<div class="t" style="left:47px;top:327px;color:#1c1c1c">Picture Box</div>
<svg style="left:16px;top:356px;" width="22" height="22" viewBox="0 0 22 22"><rect x="0.500" y="2.500" width="21" height="17" fill="#fff" stroke="#a9bdd2"/><rect x="2" y="4" width="18" height="14" fill="url(#gImg)"/><rect x="2" y="14.500" width="18" height="3.500" fill="#0f4f8e" opacity=".5"/></svg>
<div class="t" style="left:47px;top:359px;color:#1c1c1c">Image</div>
<svg style="left:16px;top:388px;" width="22" height="22" viewBox="0 0 22 22"><circle cx="11" cy="11" r="10" fill="#e9edf3" stroke="#8fa0b8" stroke-width="1.400"/><circle cx="11" cy="11" r="7.500" fill="#fbfcfe" stroke="#c3cbd8"/><path d="M11 12l5.500-6.500" stroke="#d5622a" stroke-width="2"/><path d="M3 15a9 9 0 0 1 2-10" stroke="#6da0d6" stroke-width="2" fill="none"/><path d="M16 5a9 9 0 0 1 3 9" stroke="#e0853e" stroke-width="2" fill="none"/></svg>
<div class="t" style="left:47px;top:391px;color:#1c1c1c">Gauge</div>
<svg style="left:16px;top:420px;" width="22" height="22" viewBox="0 0 22 22"><rect x="0.500" y="6.500" width="21" height="3.500" fill="#8db6e2" stroke="#5f8fc6"/><rect x="0.500" y="12.500" width="21" height="3.500" fill="#8db6e2" stroke="#5f8fc6"/><path d="M11 2v18" stroke="#6c7380" stroke-width="1"/><rect x="9.500" y="0.500" width="3" height="3" fill="#fff" stroke="#6c7380"/><rect x="9.500" y="18.500" width="3" height="3" fill="#fff" stroke="#6c7380"/></svg>
<div class="t" style="left:47px;top:423px;color:#1c1c1c">Cross-section Line</div>
<svg style="left:16px;top:452px;" width="22" height="22" viewBox="0 0 22 22"><rect x="0.500" y="5.500" width="21" height="3" fill="#8db6e2" stroke="#6f9bd0"/><rect x="0.500" y="9.500" width="21" height="3" fill="#8db6e2" stroke="#6f9bd0"/><rect x="0.500" y="13.500" width="21" height="3" fill="#8db6e2" stroke="#6f9bd0"/><path d="M3 2.500h16M3 19.500h16M3.500 3v16M18.500 3v16" stroke="#7c8492" stroke-width=".8" fill="none"/><rect x="2" y="1" width="3" height="3" fill="#fff" stroke="#6c7380" stroke-width=".8"/><rect x="17" y="1" width="3" height="3" fill="#fff" stroke="#6c7380" stroke-width=".8"/><rect x="2" y="18" width="3" height="3" fill="#fff" stroke="#6c7380" stroke-width=".8"/><rect x="17" y="18" width="3" height="3" fill="#fff" stroke="#6c7380" stroke-width=".8"/></svg>
<div class="t" style="left:47px;top:455px;color:#1c1c1c">Cross-section Box</div>
<svg style="left:16px;top:484px;" width="22" height="22" viewBox="0 0 22 22"><rect x="0.500" y="0.500" width="13" height="13" fill="#a6c35c" stroke="#86a542"/><circle cx="14" cy="14" r="7.500" fill="#62a5e4" stroke="#3f7fc0"/></svg>
<div class="t" style="left:47px;top:487px;color:#1c1c1c">Shape</div>
<svg style="left:16px;top:516px;" width="22" height="22" viewBox="0 0 22 22"><rect x="0.500" y="2.500" width="21" height="16" fill="#fdfdfe" stroke="#a9adb8"/><path d="M3.500 5v11M5.500 5v11M8 5v11M10.500 5v11M12.500 5v11M15.500 5v11M18 5v11" stroke="#222" stroke-width="1.200"/><path d="M7 5v11M14 5v11" stroke="#222" stroke-width=".600"/></svg>
<div class="t" style="left:47px;top:519px;color:#1c1c1c">Bar Code</div>
<svg style="left:16px;top:548px;" width="22" height="22" viewBox="0 0 22 22"><rect x="0.500" y="2.500" width="21" height="17" fill="#fdfdfe" stroke="#8ba3c4"/><rect x="0.500" y="2.500" width="21" height="4.500" fill="#8fb4e2" stroke="#6b93c8"/><path d="M7.500 7v12M14.500 7v12M1 11h20M1 15h20" stroke="#a9bbd4" stroke-width="1"/></svg>
<div class="t" style="left:47px;top:551px;color:#1c1c1c">Table</div>
<svg style="left:16px;top:580px;" width="22" height="22" viewBox="0 0 22 22"><rect x="1" y="12" width="4" height="8" fill="#e8983f"/><rect x="6" y="7" width="4" height="13" fill="#8bb24c"/><rect x="11" y="2" width="4" height="18" fill="#4f86c6"/><rect x="16" y="6" width="4" height="14" fill="#d9705a"/></svg>
<div class="t" style="left:47px;top:583px;color:#1c1c1c">Chart</div>
<svg style="left:16px;top:612px;" width="22" height="22" viewBox="0 0 22 22"><rect x="0.500" y="2.500" width="21" height="17" fill="#fdfdfe" stroke="#a9adb8"/><path d="M3 15l3-3 2 2 3-4 2 2 3-4 3 1" stroke="#d24a3a" stroke-width="1.400" fill="none"/></svg>
<div class="t" style="left:47px;top:615px;color:#1c1c1c">Sparkline</div>
<div style="left:170px;top:189px;width:1080px;height:822px;background:#ebecf0;border:1px solid #a5a7b0"></div>
<div style="left:173px;top:167px;width:127px;height:24px;background:linear-gradient(#f0f1f4,#ebecf0 60%);border:1px solid #a5a7b0;border-bottom:none;border-radius:2px 2px 0 0"></div>
<div class="t" style="left:182px;top:171px;color:#1c1c1c;letter-spacing:-0.1px">My Customer List*</div>
<svg style="left:284px;top:175px;" width="9" height="8" viewBox="0 0 9 8"><path d="M1 1l7 6M8 1l-7 6" stroke="#555962" stroke-width="1.700"/></svg>
<svg style="left:1230px;top:176px;" width="8" height="5" viewBox="0 0 8 5"><path d="M0 0h8l-4 5z" fill="#555962"/></svg>
<div style="left:188px;top:207px;width:14px;height:14px;background:#fdfdfe;border:1px solid #c9cbd3"></div>
<svg style="left:192px;top:211px;" width="6" height="6" viewBox="0 0 6 6"><path d="M5.500 .500v5h-5z" fill="#b9bbc2"/></svg>
<div style="left:221px;top:207px;width:817px;height:14px;background:#fdfdfe;border:1px solid #d6d8de"></div>
<div style="left:221px;top:207px;width:79px;height:14px;background:#d3d4d9"></div>
<div class="t c" style="left:214.4px;top:206px;width:20px;font-size:9.500px;color:#a3a5ab;letter-spacing:-0.3px">2</div>
<div style="left:243px;top:213px;width:1px;height:2px;background:#9a9ca3"></div>
<div class="t c" style="left:252.2px;top:206px;width:20px;font-size:9.500px;color:#a3a5ab;letter-spacing:-0.3px">1</div>
<div style="left:281px;top:213px;width:1px;height:2px;background:#9a9ca3"></div>
<div style="left:319px;top:213px;width:1px;height:2px;background:#9a9ca3"></div>
<div class="t c" style="left:327.8px;top:206px;width:20px;font-size:9.500px;color:#9a9ca3;letter-spacing:-0.3px">1</div>
<div style="left:357px;top:213px;width:1px;height:2px;background:#9a9ca3"></div>
<div class="t c" style="left:365.6px;top:206px;width:20px;font-size:9.500px;color:#9a9ca3;letter-spacing:-0.3px">2</div>
<div style="left:394px;top:213px;width:1px;height:2px;background:#9a9ca3"></div>
<div class="t c" style="left:403.4px;top:206px;width:20px;font-size:9.500px;color:#9a9ca3;letter-spacing:-0.3px">3</div>
<div style="left:432px;top:213px;width:1px;height:2px;background:#9a9ca3"></div>
<div class="t c" style="left:441.2px;top:206px;width:20px;font-size:9.500px;color:#9a9ca3;letter-spacing:-0.3px">4</div>
<div style="left:470px;top:213px;width:1px;height:2px;background:#9a9ca3"></div>
<div class="t c" style="left:479.0px;top:206px;width:20px;font-size:9.500px;color:#9a9ca3;letter-spacing:-0.3px">5</div>
<div style="left:508px;top:213px;width:1px;height:2px;background:#9a9ca3"></div>
<div class="t c" style="left:516.8px;top:206px;width:20px;font-size:9.500px;color:#9a9ca3;letter-spacing:-0.3px">6</div>
<div style="left:546px;top:213px;width:1px;height:2px;background:#9a9ca3"></div>
<div class="t c" style="left:554.6px;top:206px;width:20px;font-size:9.500px;color:#9a9ca3;letter-spacing:-0.3px">7</div>
<div style="left:583px;top:213px;width:1px;height:2px;background:#9a9ca3"></div>
<div class="t c" style="left:592.4px;top:206px;width:20px;font-size:9.500px;color:#9a9ca3;letter-spacing:-0.3px">8</div>
<div style="left:621px;top:213px;width:1px;height:2px;background:#9a9ca3"></div>
<div class="t c" style="left:630.2px;top:206px;width:20px;font-size:9.500px;color:#9a9ca3;letter-spacing:-0.3px">9</div>
<div style="left:659px;top:213px;width:1px;height:2px;background:#9a9ca3"></div>
<div class="t c" style="left:668.0px;top:206px;width:20px;font-size:9.500px;color:#9a9ca3;letter-spacing:-0.3px">10</div>
<div style="left:697px;top:213px;width:1px;height:2px;background:#9a9ca3"></div>
<div class="t c" style="left:705.8px;top:206px;width:20px;font-size:9.500px;color:#9a9ca3;letter-spacing:-0.3px">11</div>
<div style="left:735px;top:213px;width:1px;height:2px;background:#9a9ca3"></div>
<div class="t c" style="left:743.6px;top:206px;width:20px;font-size:9.500px;color:#9a9ca3;letter-spacing:-0.3px">12</div>
<div style="left:772px;top:213px;width:1px;height:2px;background:#9a9ca3"></div>
<div class="t c" style="left:781.4px;top:206px;width:20px;font-size:9.500px;color:#9a9ca3;letter-spacing:-0.3px">13</div>
<div style="left:810px;top:213px;width:1px;height:2px;background:#9a9ca3"></div>
<div class="t c" style="left:819.2px;top:206px;width:20px;font-size:9.500px;color:#9a9ca3;letter-spacing:-0.3px">14</div>
<div style="left:848px;top:213px;width:1px;height:2px;background:#9a9ca3"></div>
<div class="t c" style="left:857.0px;top:206px;width:20px;font-size:9.500px;color:#9a9ca3;letter-spacing:-0.3px">15</div>
<div style="left:886px;top:213px;width:1px;height:2px;background:#9a9ca3"></div>
<div class="t c" style="left:894.8px;top:206px;width:20px;font-size:9.500px;color:#9a9ca3;letter-spacing:-0.3px">16</div>
<div style="left:924px;top:213px;width:1px;height:2px;background:#9a9ca3"></div>
<div class="t c" style="left:932.6px;top:206px;width:20px;font-size:9.500px;color:#9a9ca3;letter-spacing:-0.3px">17</div>
<div style="left:961px;top:213px;width:1px;height:2px;background:#9a9ca3"></div>
<div class="t c" style="left:970.4px;top:206px;width:20px;font-size:9.500px;color:#9a9ca3;letter-spacing:-0.3px">18</div>
<div style="left:999px;top:213px;width:1px;height:2px;background:#9a9ca3"></div>
<div class="t c" style="left:1008.2px;top:206px;width:20px;font-size:9.500px;color:#9a9ca3;letter-spacing:-0.3px">19</div>
<div style="left:188px;top:239px;width:14px;height:30px;background:#d3d4d9;border:1px solid #d3d4d9"></div>
<div style="left:194px;top:256px;width:2px;height:1px;background:#777a83"></div>
<svg style="left:192px;top:275px;" width="6" height="8" viewBox="0 0 6 8"><path d="M0 .500h6M0 3h6M0 5.500h6M0 8h6" stroke="#5c5f66" stroke-width="1"/></svg>
<div style="left:188px;top:311px;width:14px;height:95px;background:#fdfdfe;border:1px solid #d6d8de"></div>
<div style="left:194px;top:327px;width:2px;height:1px;background:#777a83"></div>
<div class="t c" style="left:185px;top:338px;width:20px;font-size:9.500px;color:#9a9ca3">1</div>
<div style="left:194px;top:365px;width:2px;height:1px;background:#777a83"></div>
<div class="t c" style="left:185px;top:376px;width:20px;font-size:9.500px;color:#9a9ca3">2</div>
<div style="left:194px;top:403px;width:2px;height:1px;background:#777a83"></div>
<svg style="left:192px;top:412px;" width="6" height="8" viewBox="0 0 6 8"><path d="M0 .500h6M0 3h6M0 5.500h6M0 8h6" stroke="#5c5f66" stroke-width="1"/></svg>
<div style="left:188px;top:428px;width:14px;height:34px;background:#fdfdfe;border:1px solid #d6d8de"></div>
<div style="left:194px;top:444px;width:2px;height:1px;background:#777a83"></div>
<svg style="left:192px;top:468px;" width="6" height="8" viewBox="0 0 6 8"><path d="M0 .500h6M0 3h6M0 5.500h6M0 8h6" stroke="#5c5f66" stroke-width="1"/></svg>
<div style="left:188px;top:484px;width:14px;height:33px;background:#fdfdfe;border:1px solid #d6d8de"></div>
<div style="left:194px;top:499px;width:2px;height:1px;background:#777a83"></div>
<svg style="left:192px;top:523px;" width="6" height="8" viewBox="0 0 6 8"><path d="M0 .500h6M0 3h6M0 5.500h6M0 8h6" stroke="#5c5f66" stroke-width="1"/></svg>
<div style="left:188px;top:538px;width:14px;height:96px;background:#fdfdfe;border:1px solid #d6d8de"></div>
<div style="left:194px;top:554px;width:2px;height:1px;background:#777a83"></div>
<div class="t c" style="left:185px;top:565px;width:20px;font-size:9.500px;color:#9a9ca3">1</div>
<div style="left:194px;top:592px;width:2px;height:1px;background:#777a83"></div>
<div class="t c" style="left:185px;top:603px;width:20px;font-size:9.500px;color:#9a9ca3">2</div>
<div style="left:194px;top:630px;width:2px;height:1px;background:#777a83"></div>
<div style="left:188px;top:634px;width:14px;height:30px;background:#d3d4d9;border:1px solid #d3d4d9"></div>
<div style="left:194px;top:651px;width:2px;height:1px;background:#777a83"></div>
<div style="left:220px;top:238px;width:818px;height:427px;background:#fff;border:1px solid #a3a4a9;border-right-color:#8e8f94;border-bottom-color:#8e8f94;box-shadow:1px 1px 9px 1px rgba(100,104,120,.30)"></div>
<svg width="0" height="0" style="left:0;top:0"><defs><g id="gridg" shape-rendering="crispEdges" fill="none"><path d="M7.5 0V140M11.5 0V140M15.5 0V140M19.5 0V140M26.5 0V140M30.5 0V140M34.5 0V140M37.5 0V140M45.5 0V140M49.5 0V140M53.5 0V140M56.5 0V140M64.5 0V140M68.5 0V140M71.5 0V140M75.5 0V140M83.5 0V140M87.5 0V140M90.5 0V140M94.5 0V140M102.5 0V140M105.5 0V140M109.5 0V140M113.5 0V140M121.5 0V140M124.5 0V140M128.5 0V140M132.5 0V140M139.5 0V140M143.5 0V140M147.5 0V140M151.5 0V140M158.5 0V140M162.5 0V140M166.5 0V140M170.5 0V140M177.5 0V140M181.5 0V140M185.5 0V140M189.5 0V140M196.5 0V140M200.5 0V140M204.5 0V140M208.5 0V140M215.5 0V140M219.5 0V140M223.5 0V140M226.5 0V140M234.5 0V140M238.5 0V140M242.5 0V140M245.5 0V140M253.5 0V140M257.5 0V140M260.5 0V140M264.5 0V140M272.5 0V140M276.5 0V140M279.5 0V140M283.5 0V140M291.5 0V140M294.5 0V140M298.5 0V140M302.5 0V140M310.5 0V140M313.5 0V140M317.5 0V140M321.5 0V140M328.5 0V140M332.5 0V140M336.5 0V140M340.5 0V140M347.5 0V140M351.5 0V140M355.5 0V140M359.5 0V140M366.5 0V140M370.5 0V140M374.5 0V140M378.5 0V140M385.5 0V140M389.5 0V140M393.5 0V140M397.5 0V140M404.5 0V140M408.5 0V140M412.5 0V140M415.5 0V140M423.5 0V140M427.5 0V140M431.5 0V140M434.5 0V140M442.5 0V140M446.5 0V140M449.5 0V140M453.5 0V140M461.5 0V140M465.5 0V140M468.5 0V140M472.5 0V140M480.5 0V140M483.5 0V140M487.5 0V140M491.5 0V140M499.5 0V140M502.5 0V140M506.5 0V140M510.5 0V140M517.5 0V140M521.5 0V140M525.5 0V140M529.5 0V140M536.5 0V140M540.5 0V140M544.5 0V140M548.5 0V140M555.5 0V140M559.5 0V140M563.5 0V140M567.5 0V140M574.5 0V140M578.5 0V140M582.5 0V140M586.5 0V140M593.5 0V140M597.5 0V140M601.5 0V140M604.5 0V140M612.5 0V140M616.5 0V140M620.5 0V140M623.5 0V140M631.5 0V140M635.5 0V140M638.5 0V140M642.5 0V140M650.5 0V140M654.5 0V140M657.5 0V140M661.5 0V140M669.5 0V140M672.5 0V140M676.5 0V140M680.5 0V140M688.5 0V140M691.5 0V140M695.5 0V140M699.5 0V140M706.5 0V140M710.5 0V140M714.5 0V140M718.5 0V140M725.5 0V140M729.5 0V140M733.5 0V140M737.5 0V140M744.5 0V140M748.5 0V140M752.5 0V140M756.5 0V140M763.5 0V140M767.5 0V140M771.5 0V140M775.5 0V140M782.5 0V140M786.5 0V140M790.5 0V140M793.5 0V140M801.5 0V140M805.5 0V140M809.5 0V140M812.5 0V140M0 4.5H816M0 8.5H816M0 11.5H816M0 15.5H816M0 23.5H816M0 26.5H816M0 30.5H816M0 34.5H816M0 42.5H816M0 45.5H816M0 49.5H816M0 53.5H816M0 60.5H816M0 64.5H816M0 68.5H816M0 72.5H816M0 79.5H816M0 83.5H816M0 87.5H816M0 91.5H816M0 98.5H816M0 102.5H816M0 106.5H816M0 110.5H816M0 117.5H816M0 121.5H816M0 125.5H816M0 129.5H816M0 136.5H816M0 140.5H816" stroke="#f3f3f4"/><path d="M3.5 0V140M22.5 0V140M41.5 0V140M60.5 0V140M79.5 0V140M98.5 0V140M117.5 0V140M136.5 0V140M155.5 0V140M173.5 0V140M192.5 0V140M211.5 0V140M230.5 0V140M249.5 0V140M268.5 0V140M287.5 0V140M306.5 0V140M325.5 0V140M344.5 0V140M363.5 0V140M381.5 0V140M400.5 0V140M419.5 0V140M438.5 0V140M457.5 0V140M476.5 0V140M495.5 0V140M514.5 0V140M533.5 0V140M551.5 0V140M570.5 0V140M589.5 0V140M608.5 0V140M627.5 0V140M646.5 0V140M665.5 0V140M684.5 0V140M703.5 0V140M722.5 0V140M741.5 0V140M759.5 0V140M778.5 0V140M797.5 0V140M0 19.5H816M0 38.5H816M0 57.5H816M0 76.5H816M0 94.5H816M0 113.5H816M0 132.5H816" stroke="#e5e5e6"/></g></defs></svg>
<svg style="left:221px;top:239px;overflow:hidden;background:#fff" width="816" height="30"><use href="#gridg"/></svg>
<div class="bh" style="left:221px;top:269px;width:816px;height:20px;"></div>
<svg style="left:226.5px;top:276.0px;" width="8" height="6" viewBox="0 0 8 6"><path d="M0 0h8l-4 6z" fill="#77797f"/></svg>
<div class="t" style="left:259px;top:271.0px;color:#85868c;letter-spacing:0">Customer</div>
<div class="bh" style="left:221px;top:289px;width:816px;height:20px;border-top:none"></div>
<svg style="left:246.5px;top:296.0px;" width="8" height="6" viewBox="0 0 8 6"><path d="M0 0h8l-4 6z" fill="#77797f"/></svg>
<div class="t" style="left:279px;top:291.0px;color:#85868c;letter-spacing:0">Header1</div>
<svg style="left:221px;top:309px;overflow:hidden;background:#fff" width="816" height="97"><use href="#gridg"/></svg>
<div class="bh" style="left:221px;top:406px;width:816px;height:21px;"></div>
<svg style="left:246.5px;top:413.5px;" width="8" height="6" viewBox="0 0 8 6"><path d="M0 0h8l-4 6z" fill="#77797f"/></svg>
<div class="t" style="left:279px;top:408.5px;color:#85868c;letter-spacing:0">Header2</div>
<svg style="left:221px;top:427px;overflow:hidden;background:#fff" width="816" height="35"><use href="#gridg"/></svg>
<div class="bh" style="left:221px;top:462px;width:816px;height:21px;"></div>
<svg style="left:246.5px;top:469.5px;" width="8" height="6" viewBox="0 0 8 6"><path d="M0 0h8l-4 6z" fill="#77797f"/></svg>
<div class="t" style="left:279px;top:464.5px;color:#85868c;letter-spacing:0">Body1</div>
<svg style="left:221px;top:483px;overflow:hidden;background:#fff" width="816" height="34"><use href="#gridg"/></svg>
<div class="bh" style="left:221px;top:517px;width:816px;height:21px;"></div>
<svg style="left:246.5px;top:524.5px;" width="8" height="6" viewBox="0 0 8 6"><path d="M0 0h8l-4 6z" fill="#77797f"/></svg>
<div class="t" style="left:279px;top:519.5px;color:#85868c;letter-spacing:0">Footer1</div>
<svg style="left:221px;top:538px;overflow:hidden;background:#fff" width="816" height="126"><use href="#gridg"/></svg>
<div style="left:300px;top:239px;width:1px;height:30px;background:repeating-linear-gradient(to bottom,#888888 0 2px,transparent 2px 4px)"></div>
<div style="left:300px;top:309px;width:1px;height:97px;background:repeating-linear-gradient(to bottom,#888888 0 2px,transparent 2px 4px)"></div>
<div style="left:300px;top:427px;width:1px;height:35px;background:repeating-linear-gradient(to bottom,#888888 0 2px,transparent 2px 4px)"></div>
<div style="left:300px;top:483px;width:1px;height:34px;background:repeating-linear-gradient(to bottom,#888888 0 2px,transparent 2px 4px)"></div>
<div style="left:300px;top:538px;width:1px;height:126px;background:repeating-linear-gradient(to bottom,#888888 0 2px,transparent 2px 4px)"></div>
<div style="left:221px;top:634px;width:816px;height:1px;background:repeating-linear-gradient(to right,#888888 0 2px,transparent 2px 4px)"></div>
<div class="fld" style="left:300px;top:428px;width:189px;height:22px;overflow:hidden;"><div class="t ar" style="left:-1px;top:2px;font-weight:bold;text-decoration:underline;">Name</div></div>
<div class="fld" style="left:493px;top:428px;width:205px;height:22px;overflow:hidden;"><div class="t ar" style="left:-1px;top:2px;font-weight:bold;text-decoration:underline;">Address</div></div>
<div class="fld" style="left:702px;top:428px;width:96px;height:22px;overflow:hidden;"><div class="t ar" style="left:-1px;top:2px;font-weight:bold;text-decoration:underline;">City</div></div>
<div class="fld" style="left:803px;top:428px;width:34px;height:22px;overflow:hidden;"><div class="t ar" style="left:0px;top:2px;font-weight:bold;text-decoration:underline;">State</div></div>
<div class="fld" style="left:841px;top:428px;width:97px;height:22px;overflow:hidden;"><div class="t ar" style="left:-1px;top:2px;font-weight:bold;text-decoration:underline;">Zip Code</div></div>
<div class="fld" style="left:942px;top:428px;width:96px;height:22px;overflow:hidden;border-right:none"><div class="t ar" style="right:0;top:2px;font-weight:bold;text-decoration:underline">Balance ($)</div></div>
<div class="fld" style="left:300px;top:484px;width:189px;height:22px;overflow:hidden;"><div class="t ar" style="left:-1px;top:2px;"><i>...</i>Name</div></div>
<div class="fld" style="left:493px;top:484px;width:205px;height:22px;overflow:hidden;"><div class="t ar" style="left:-1px;top:2px;"><i>...</i>Address</div></div>
<div class="fld" style="left:702px;top:484px;width:96px;height:22px;overflow:hidden;"><div class="t ar" style="left:-1px;top:2px;"><i>...</i>City</div></div>
<div class="fld" style="left:803px;top:484px;width:34px;height:22px;overflow:hidden;"><div class="t ar" style="left:-1px;top:2px;"><i>...</i>Stat</div></div>
<div class="fld" style="left:841px;top:484px;width:97px;height:22px;overflow:hidden;"><div class="t ar" style="left:-1px;top:2px;"><i>...</i>Zip</div></div>
<div class="fld" style="left:942px;top:484px;width:96px;height:22px;overflow:hidden;border-right:none"><div class="t ar" style="left:1px;top:1px">DynamicsNavDat</div></div>
<div class="fld" style="left:737px;top:565px;width:189px;height:22px;overflow:hidden;"><div class="t ar" style="left:-1px;top:2px;font-weight:bold;">Total Customer Balance:</div></div>
<div class="fld" style="left:942px;top:565px;width:96px;height:22px;overflow:hidden;border-right:none"><div class="t ar" style="left:1px;top:1px">DynamicsNavDat</div></div>
<div style="left:298px;top:308px;width:193px;height:27px;border:1px solid #8793ad;background:rgba(226,231,242,.6)"></div>
<div style="left:300px;top:310px;width:189px;height:23px;border:1px solid #a9abb3;background:#fff"></div>
<svg style="left:301px;top:311px;overflow:hidden" width="187" height="21"><use href="#gridg" x="-80" y="-2"/></svg>
<div class="t ar" style="left:300px;top:314px;font-weight:bold">Name</div>
<div style="left:292.0px;top:302.0px;width:5px;height:5px;background:#7f8cab"></div>
<div style="left:292.0px;top:319.0px;width:5px;height:5px;background:#7f8cab"></div>
<div style="left:292.0px;top:336.0px;width:5px;height:5px;background:#7f8cab"></div>
<div style="left:392.0px;top:302.0px;width:5px;height:5px;background:#7f8cab"></div>
<div style="left:392.0px;top:336.0px;width:5px;height:5px;background:#7f8cab"></div>
<div style="left:491.5px;top:302.0px;width:5px;height:5px;background:#7f8cab"></div>
<div style="left:491.5px;top:319.0px;width:5px;height:5px;background:#7f8cab"></div>
<div style="left:491.5px;top:336.0px;width:5px;height:5px;background:#7f8cab"></div>
<div style="left:477px;top:295px;width:11px;height:11px;background:#fff;border:1px solid #6a6a6a"></div>
<svg style="left:480px;top:297px;" width="5" height="7" viewBox="0 0 5 7"><path d="M1 .500l3 3-3 3" stroke="#555" stroke-width="1" fill="none"/></svg>
<div style="left:1254px;top:167px;width:664px;height:844px;background:#ebecf1;border:1px solid #a5a7b0"></div>
<div style="left:1255px;top:168px;width:662px;height:21px;background:linear-gradient(#e6e7ec,#e1e2e7);border-bottom:1px solid #b9bbc4"></div>
<div class="t" style="left:1259px;top:170px;font-weight:bold;color:#a4a7af;letter-spacing:.4px">Property Grid</div>
<svg style="left:1900px;top:173px;" width="8" height="10" viewBox="0 0 8 10"><path d="M2 0h4v4.500h-4zM0.500 5h7M4 5v4.500" stroke="#8d919b" stroke-width="1" fill="#d3d6dd"/></svg>
<div style="left:1256px;top:189px;width:1660px;height:21px;width:660px;background:#fff;border-bottom:1px solid #cfd1d9"></div>
<div class="t" style="left:1259px;top:191px;font-weight:bold;color:#1c1c1c;letter-spacing:.1px;word-spacing:-1px">Label8&nbsp;&nbsp;&nbsp;Label</div>
<svg style="left:1903px;top:196px;" width="8" height="4" viewBox="0 0 8 4"><path d="M0 0h8l-4 4z" fill="#222"/></svg>
<div style="left:1256px;top:210px;width:660px;height:31px;background:linear-gradient(#fefeff,#eef0f6);border-bottom:1px solid #a9abb5"></div>
<div style="left:1258px;top:213px;width:24px;height:24px;background:linear-gradient(#e6e9f2,#d9deea);border:1px solid #c2c7d6;border-radius:2px"></div>
<svg style="left:1262px;top:217px;" width="17" height="16" viewBox="0 0 17 16"><rect x="0.500" y="0.500" width="6" height="6" fill="#fff" stroke="#2f5f98"/><path d="M2 3.500h3M3.500 2v3" stroke="#2f5f98"/><rect x="0.500" y="9.500" width="6" height="6" fill="#fff" stroke="#2f5f98"/><path d="M2 12.500h3M3.500 11v3" stroke="#2f5f98"/><path d="M8.500 1.500h8M8.500 3.500h6M8.500 5.500h8M8.500 10.500h8M8.500 12.500h6M8.500 14.500h8" stroke="#8a8f9c" stroke-width="1"/></svg>
<svg style="left:1288px;top:216px;" width="16" height="18" viewBox="0 0 16 18"><text x="0" y="7.500" font-size="9" font-weight="bold" fill="#2d68b3" font-family="Liberation Sans,sans-serif">A</text><text x="0" y="15.500" font-size="9" font-weight="bold" fill="#9a2f24" font-family="Liberation Sans,sans-serif">Z</text><path d="M11.500 1v12" stroke="#111" stroke-width="1.200"/><path d="M8.500 11.500h6l-3 4.500z" fill="#111"/></svg>
<div style="left:1256px;top:241px;width:660px;height:684px;background:#fff"></div>
<div style="left:1256px;top:241px;width:17px;height:587px;background:#eef0f6;border-right:1px solid #dfe0e6"></div>
<div class="cat" style="left:1256px;top:241px;width:660px;height:20px;"></div>
<div class="t" style="left:1276px;top:242.0px;color:#1c1c1c">Appearance</div>
<svg style="left:1901px;top:248.0px;" width="9" height="6" viewBox="0 0 9 6"><path d="M1 5l3.500-3.500 3.500 3.500" stroke="#8c8f99" stroke-width="1.400" fill="none"/></svg>
<div class="row" style="left:1273px;top:261px;width:643px;height:19px;"></div>
<div style="left:1585px;top:261px;width:1px;height:19px;background:#dfe0e6"></div>
<div class="t" style="left:1290px;top:262.0px;color:#1c1c1c">Background Color</div>
<div style="left:1592px;top:265px;width:23px;height:10px;background:#fff;border:1px solid #222"></div>
<div class="t" style="left:1617px;top:262.0px;color:#1c1c1c;">Transparent</div>
<div class="row" style="left:1273px;top:280px;width:643px;height:19px;"></div>
<div style="left:1585px;top:280px;width:1px;height:19px;background:#dfe0e6"></div>
<div class="t" style="left:1290px;top:281.0px;color:#1c1c1c">Border Color</div>
<div style="left:1592px;top:284px;width:23px;height:10px;background:#000;border:1px solid #222"></div>
<div class="t" style="left:1617px;top:281.0px;color:#1c1c1c;">Black</div>
<div class="row" style="left:1273px;top:299px;width:643px;height:19px;"></div>
<div style="left:1585px;top:299px;width:1px;height:19px;background:#dfe0e6"></div>
<div class="t" style="left:1290px;top:300.0px;color:#1c1c1c">Border Dash Style</div>
<div class="t" style="left:1589px;top:300.0px;color:#1c1c1c;">Solid</div>
<div class="row" style="left:1273px;top:318px;width:643px;height:17px;"></div>
<div style="left:1585px;top:318px;width:1px;height:17px;background:#dfe0e6"></div>
<div class="t" style="left:1290px;top:318.0px;color:#1c1c1c">Border Width</div>
<div class="t" style="left:1589px;top:318.0px;color:#1c1c1c;">1</div>
<div class="row" style="left:1273px;top:335px;width:643px;height:19px;"></div>
<div style="left:1585px;top:335px;width:1px;height:19px;background:#dfe0e6"></div>
<div class="t" style="left:1290px;top:336.0px;color:#1c1c1c">Borders</div>
<div class="t" style="left:1589px;top:336.0px;color:#1c1c1c;">None</div>
<div class="row" style="left:1273px;top:354px;width:643px;height:17px;"></div>
<div style="left:1585px;top:354px;width:1px;height:17px;background:#dfe0e6"></div>
<div class="t" style="left:1290px;top:354.0px;color:#1c1c1c">Caption</div>
<div class="t" style="left:1590px;top:354.0px;color:#1c1c1c;font-weight:bold;letter-spacing:.3px">Name</div>
<div class="row" style="left:1273px;top:371px;width:643px;height:19px;"></div>
<div style="left:1585px;top:371px;width:1px;height:19px;background:#dfe0e6"></div>
<div class="t" style="left:1290px;top:372.0px;color:#1c1c1c">Caption - Multilanguage</div>
<svg style="left:1278px;top:376.5px;" width="5" height="7" viewBox="0 0 5 7"><path d="M.500 0v7l3.500-3.500z" fill="#9a9da6"/></svg>
<div class="t" style="left:1590px;top:372.0px;color:#1c1c1c;font-weight:bold;letter-spacing:.3px">ENU=Name</div>
<div class="row" style="left:1273px;top:390px;width:643px;height:19px;"></div>
<div style="left:1585px;top:390px;width:1px;height:19px;background:#dfe0e6"></div>
<div class="t" style="left:1290px;top:391.0px;color:#1c1c1c">Font</div>
<svg style="left:1278px;top:395.5px;" width="5" height="7" viewBox="0 0 5 7"><path d="M.500 0v7l3.500-3.500z" fill="#9a9da6"/></svg>
<div class="t" style="left:1590px;top:391.0px;color:#1c1c1c;font-weight:bold;letter-spacing:.3px">Arial, 9pt, style=Bold</div>
<div class="row" style="left:1273px;top:409px;width:643px;height:19px;"></div>
<div style="left:1585px;top:409px;width:1px;height:19px;background:#dfe0e6"></div>
<div class="t" style="left:1290px;top:410.0px;color:#1c1c1c">Foreground Color</div>
<div style="left:1592px;top:413px;width:23px;height:10px;background:#000;border:1px solid #222"></div>
<div class="t" style="left:1617px;top:410.0px;color:#1c1c1c;">Black</div>
<div class="row" style="left:1273px;top:428px;width:643px;height:19px;"></div>
<div style="left:1585px;top:428px;width:1px;height:19px;background:#dfe0e6"></div>
<div class="t" style="left:1290px;top:429.0px;color:#1c1c1c">Leader Dots</div>
<div class="t" style="left:1590px;top:429.0px;color:#1c1c1c;font-weight:bold;letter-spacing:.3px">False</div>
<div class="row" style="left:1273px;top:447px;width:643px;height:19px;"></div>
<div style="left:1585px;top:447px;width:1px;height:19px;background:#dfe0e6"></div>
<div class="t" style="left:1290px;top:448.0px;color:#1c1c1c">Multiline</div>
<div class="t" style="left:1589px;top:448.0px;color:#1c1c1c;">No</div>
<div class="row" style="left:1273px;top:466px;width:643px;height:17px;"></div>
<div style="left:1585px;top:466px;width:1px;height:17px;background:#dfe0e6"></div>
<div class="t" style="left:1290px;top:466.0px;color:#1c1c1c">Pad String</div>
<div class="row" style="left:1273px;top:483px;width:643px;height:17px;"></div>
<div style="left:1585px;top:483px;width:1px;height:17px;background:#dfe0e6"></div>
<div class="t" style="left:1290px;top:483.0px;color:#1c1c1c">Padding</div>
<svg style="left:1278px;top:487.5px;" width="5" height="7" viewBox="0 0 5 7"><path d="M.500 0v7l3.500-3.500z" fill="#9a9da6"/></svg>
<div class="t" style="left:1589px;top:483.0px;color:#1c1c1c;">0, 0, 0, 0</div>
<div class="row" style="left:1273px;top:500px;width:643px;height:18px;"></div>
<div style="left:1585px;top:500px;width:1px;height:18px;background:#dfe0e6"></div>
<div class="t" style="left:1290px;top:500.5px;color:#1c1c1c">Text Alignment</div>
<div class="t" style="left:1590px;top:500.5px;color:#1c1c1c;font-weight:bold;letter-spacing:.3px">Middle Left</div>
<div class="cat" style="left:1256px;top:518px;width:660px;height:19px;"></div>
<div class="t" style="left:1276px;top:518.5px;color:#1c1c1c">Behavior</div>
<svg style="left:1901px;top:524.5px;" width="9" height="6" viewBox="0 0 9 6"><path d="M1 5l3.500-3.500 3.500 3.500" stroke="#8c8f99" stroke-width="1.400" fill="none"/></svg>
<div class="row" style="left:1273px;top:537px;width:643px;height:19px;"></div>
<div style="left:1585px;top:537px;width:1px;height:19px;background:#dfe0e6"></div>
<div class="t" style="left:1290px;top:538.0px;color:#1c1c1c">Anchor Horizontally</div>
<div class="t" style="left:1589px;top:538.0px;color:#1c1c1c;">None</div>
<div class="row" style="left:1273px;top:556px;width:643px;height:19px;"></div>
<div style="left:1585px;top:556px;width:1px;height:19px;background:#dfe0e6"></div>
<div class="t" style="left:1290px;top:557.0px;color:#1c1c1c">Anchor Vertically</div>
<div class="t" style="left:1589px;top:557.0px;color:#1c1c1c;">None</div>
<div class="row" style="left:1273px;top:575px;width:643px;height:18px;"></div>
<div style="left:1585px;top:575px;width:1px;height:18px;background:#dfe0e6"></div>
<div class="t" style="left:1290px;top:575.5px;color:#1c1c1c">Angle</div>
<div class="t" style="left:1589px;top:575.5px;color:#1c1c1c;">0</div>
<div class="row" style="left:1273px;top:593px;width:643px;height:18px;"></div>
<div style="left:1585px;top:593px;width:1px;height:18px;background:#dfe0e6"></div>
<div class="t" style="left:1290px;top:593.5px;color:#1c1c1c">Auto Fit</div>
<div class="t" style="left:1589px;top:593.5px;color:#1c1c1c;">No</div>
<div class="row" style="left:1273px;top:611px;width:643px;height:19px;"></div>
<div style="left:1585px;top:611px;width:1px;height:19px;background:#dfe0e6"></div>
<div class="t" style="left:1290px;top:612.0px;color:#1c1c1c">Can Grow</div>
<div class="t" style="left:1589px;top:612.0px;color:#1c1c1c;">No</div>
<div class="row" style="left:1273px;top:630px;width:643px;height:19px;"></div>
<div style="left:1585px;top:630px;width:1px;height:19px;background:#dfe0e6"></div>
<div class="t" style="left:1290px;top:631.0px;color:#1c1c1c">Can Shrink</div>
<div class="t" style="left:1589px;top:631.0px;color:#1c1c1c;">No</div>
<div class="row" style="left:1273px;top:649px;width:643px;height:19px;"></div>
<div style="left:1585px;top:649px;width:1px;height:19px;background:#dfe0e6"></div>
<div class="t" style="left:1290px;top:650.0px;color:#1c1c1c">Show Output</div>
<div class="t" style="left:1589px;top:650.0px;color:#1c1c1c;">true</div>
<div class="row" style="left:1273px;top:668px;width:643px;height:19px;"></div>
<div style="left:1585px;top:668px;width:1px;height:19px;background:#dfe0e6"></div>
<div class="t" style="left:1290px;top:669.0px;color:#1c1c1c">Visible</div>
<div class="t" style="left:1589px;top:669.0px;color:#1c1c1c;">Yes</div>
<div class="cat" style="left:1256px;top:687px;width:660px;height:17px;"></div>
<div class="t" style="left:1276px;top:686.5px;color:#1c1c1c">Design</div>
<svg style="left:1901px;top:692.5px;" width="9" height="6" viewBox="0 0 9 6"><path d="M1 5l3.500-3.500 3.500 3.500" stroke="#8c8f99" stroke-width="1.400" fill="none"/></svg>
<div class="row" style="left:1273px;top:704px;width:643px;height:18px;"></div>
<div style="left:1585px;top:704px;width:1px;height:18px;background:#dfe0e6"></div>
<div class="t" style="left:1290px;top:704.5px;color:#1c1c1c">Name</div>
<div class="t" style="left:1590px;top:704.5px;color:#1c1c1c;font-weight:bold;letter-spacing:.3px">Label8</div>
<div class="cat" style="left:1256px;top:722px;width:660px;height:18px;"></div>
<div class="t" style="left:1276px;top:722.0px;color:#1c1c1c">Layout</div>
<svg style="left:1901px;top:728.0px;" width="9" height="6" viewBox="0 0 9 6"><path d="M1 5l3.500-3.500 3.500 3.500" stroke="#8c8f99" stroke-width="1.400" fill="none"/></svg>
<div class="row" style="left:1273px;top:740px;width:643px;height:17px;"></div>
<div style="left:1585px;top:740px;width:1px;height:17px;background:#dfe0e6"></div>
<div class="t" style="left:1290px;top:740.0px;color:#1c1c1c">Location</div>
<svg style="left:1278px;top:744.5px;" width="5" height="7" viewBox="0 0 5 7"><path d="M.500 0v7l3.500-3.500z" fill="#9a9da6"/></svg>
<div class="t" style="left:1590px;top:740.0px;color:#1c1c1c;font-weight:bold;letter-spacing:.3px">0, 0</div>
<div class="row" style="left:1273px;top:757px;width:643px;height:17px;"></div>
<div style="left:1585px;top:757px;width:1px;height:17px;background:#dfe0e6"></div>
<div class="t" style="left:1290px;top:757.0px;color:#1c1c1c">Size</div>
<svg style="left:1278px;top:761.5px;" width="5" height="7" viewBox="0 0 5 7"><path d="M.500 0v7l3.500-3.500z" fill="#9a9da6"/></svg>
<div class="t" style="left:1590px;top:757.0px;color:#1c1c1c;font-weight:bold;letter-spacing:.3px">497.42, 58.42</div>
<div class="cat" style="left:1256px;top:774px;width:660px;height:18px;"></div>
<div class="t" style="left:1276px;top:774.0px;color:#1c1c1c">Printing</div>
<svg style="left:1901px;top:780.0px;" width="9" height="6" viewBox="0 0 9 6"><path d="M1 5l3.500-3.500 3.500 3.500" stroke="#8c8f99" stroke-width="1.400" fill="none"/></svg>
<div class="row" style="left:1273px;top:792px;width:643px;height:17px;"></div>
<div style="left:1585px;top:792px;width:1px;height:17px;background:#dfe0e6"></div>
<div class="t" style="left:1290px;top:792.0px;color:#1c1c1c">Device Font</div>
<div class="row" style="left:1273px;top:809px;width:643px;height:19px;"></div>
<div style="left:1585px;top:809px;width:1px;height:19px;background:#dfe0e6"></div>
<div class="t" style="left:1290px;top:810.0px;color:#1c1c1c">GDI Mode</div>
<div class="t" style="left:1589px;top:810.0px;color:#1c1c1c;">Default</div>
<div style="left:1256px;top:924px;width:660px;height:1px;background:#c6c8d0"></div>
<div style="left:1915px;top:189px;width:1px;height:736px;background:#c3c5ce"></div>
<div style="left:1255px;top:189px;width:1px;height:736px;background:#c9cbd3"></div>
<svg style="left:1578px;top:927px;" width="16" height="3" viewBox="0 0 16 3"><path d="M0 1.500h16" stroke="#8c8f99" stroke-width="2" stroke-dasharray="1 1"/></svg>
<div style="left:1256px;top:931px;width:660px;height:49px;background:#ebedf2;border:1px solid #d3d5dc;border-radius:2px"></div>
<div class="t" style="left:1263px;top:938px;font-weight:bold;color:#1c1c1c;letter-spacing:.3px">Caption</div>
<div style="left:1256px;top:982px;width:660px;height:28px;background:linear-gradient(#d9dae0,#e6e7ec 45%,#ebecf0);border-top:1px solid #a9abb5"></div>
<div style="left:1258px;top:982px;width:107px;height:27px;background:linear-gradient(#eff0f4,#ebecf1);border-left:1px solid #b9bbc4;border-right:1px solid #b9bbc4"></div>
<svg style="left:1269px;top:986px;" width="16" height="16" viewBox="0 0 16 16"><rect x="0.500" y="2.500" width="11" height="12" fill="#fbfbfd" stroke="#9aa0b0"/><rect x="0.500" y="2.500" width="11" height="3" fill="#8fb4e2"/><path d="M2.500 8.500h7M2.500 10.500h7M2.500 12.500h5" stroke="#9aa0b0"/><path d="M7 7l6-6 2 2-6 6z" fill="#e8a94a" stroke="#a9772c" stroke-width=".700"/></svg>
<div class="t" style="left:1287px;top:986px;color:#1c1c1c">Property Grid</div>
<svg style="left:1376px;top:986px;" width="16" height="16" viewBox="0 0 16 16"><rect x="2.500" y="0.500" width="9" height="12" rx="1" fill="#f5c77c" stroke="#d19a43"/><rect x="5.500" y="5.500" width="9" height="4" fill="#fdfdfe" stroke="#7f8797"/><rect x="5.500" y="11.500" width="9" height="4" fill="#fdfdfe" stroke="#7f8797"/></svg>
<div class="t" style="left:1394px;top:986px;color:#1c1c1c">Field List</div>
<svg style="left:1459px;top:986px;" width="16" height="16" viewBox="0 0 16 16"><rect x="0.500" y="2.500" width="10" height="12" fill="#d9e3f3" stroke="#6f82a8"/><rect x="3.500" y="0.500" width="5" height="3" fill="#9aa6bd" stroke="#6f7c96"/><rect x="6.500" y="6.500" width="7" height="8" fill="#a6c35c" stroke="#7e9a3e"/><circle cx="12.500" cy="8" r="3" fill="#f0b44a" stroke="#c98b2c"/></svg>
<div class="t" style="left:1478px;top:986px;color:#1c1c1c">Report Explorer</div>
<div class="t" style="left:1599px;top:946px;height:26px;line-height:26px;font-size:20.100px;color:#a3a5ab;letter-spacing:-0.1px">Activate Windows</div>
<div class="t" style="left:1599px;top:972px;height:18px;line-height:18px;font-size:14.900px;color:#a8aab0;letter-spacing:0">Go to Settings to activate Windows.</div>
<div style="left:0px;top:1011px;width:1920px;height:29px;background:linear-gradient(#dfe0e5,#e6e7eb 18%,#e3e4e9 45%,#d4d5db 78%,#c7c8cf)"></div>
<div class="t" style="left:8px;top:1019px;color:#2a2a2a;letter-spacing:0">Label8 { Loc:0,0 Size:497,58 }</div>
<div style="left:164px;top:1020px;width:1px;height:14px;background:#b9bbc3"></div>
<div style="left:1718px;top:1019px;width:1px;height:16px;background:#b9bbc3"></div>
<div class="t" style="left:1730px;top:1019px;color:#2a2a2a">100%</div>
<svg style="left:1772px;top:1020px;" width="14" height="14" viewBox="0 0 14 14"><circle cx="7" cy="7" r="5.700" fill="#f4f4f6" stroke="#8f929b" stroke-width="1.200"/><path d="M4 7h6" stroke="#70737c" stroke-width="1.500"/></svg>
<div style="left:1795px;top:1026px;width:90px;height:2px;background:#c9cbd2;border-bottom:1px solid #f4f4f6"></div>
<svg style="left:1835px;top:1020px;" width="11" height="16" viewBox="0 0 11 16"><path d="M.500 .500h10v10l-5 5-5-5z" fill="#e4e8f3" stroke="#9aa0b4"/></svg>
<svg style="left:1896px;top:1020px;" width="14" height="14" viewBox="0 0 14 14"><circle cx="7" cy="7" r="5.700" fill="#f4f4f6" stroke="#8f929b" stroke-width="1.200"/><path d="M4 7h6M7 4v6" stroke="#70737c" stroke-width="1.500"/></svg>
<div style="left:0px;top:1040px;width:1920px;height:40px;background:#0d101b"></div>
<svg style="left:16px;top:1052px;" width="16" height="16" viewBox="0 0 16 16"><path d="M0 2.300l6.500-.900v6.200h-6.500zM7.500 1.250l8.500-1.250v7.600h-8.500zM0 8.600h6.500v6.200l-6.500-.900zM7.500 8.600h8.500v7.400l-8.500-1.200z" fill="#fff"/></svg>
<div style="left:48px;top:1040px;width:344px;height:40px;background:#f2f2f2"></div>
<svg style="left:56px;top:1048px;" width="24" height="24" viewBox="0 0 24 24"><circle cx="12" cy="12" r="8.900" fill="none" stroke="#1a1a1a" stroke-width="2.700"/></svg>
<div class="t" style="left:88px;top:1051px;height:20px;line-height:20px;font-size:14.500px;color:#4a4a4a;letter-spacing:-0.1px">Type here to search</div>
<svg style="left:366px;top:1052px;" width="10" height="17" viewBox="0 0 10 17"><rect x="2.500" y="0.500" width="5" height="10" rx="2.500" fill="none" stroke="#333" stroke-width="1.100"/><path d="M.500 7.500q0 5 4.500 5t4.500-5M5 12.500v3.500M2.500 16.500h5" fill="none" stroke="#333" stroke-width="1.100"/></svg>
<svg style="left:407px;top:1052px;" width="20" height="16" viewBox="0 0 20 16"><rect x="1.500" y="3.500" width="11" height="9" fill="none" stroke="#fff" stroke-width="1.300"/><path d="M1 .800h12M1 15.200h12" stroke="#fff" stroke-width="1.300"/><path d="M16 2v3M16 7v6M16 14.500v1" stroke="#fff" stroke-width="1.600"/></svg>
<svg style="left:456px;top:1047px;" width="24" height="24" viewBox="0 0 24 24"><text x="12" y="22" font-size="32" font-weight="bold" fill="#1f7ee0" stroke="#1f7ee0" stroke-width=".8" text-anchor="middle" font-family="Liberation Sans,sans-serif">e</text><path d="M2 9q2-7 9-7.500" stroke="#1f7ee0" stroke-width="1.800" fill="none"/></svg>
<svg style="left:503px;top:1049px;" width="24" height="22" viewBox="0 0 24 22"><path d="M1 3h8l2 2h12v15h-22z" fill="#f7d36b"/><path d="M1 8h22v12h-22z" fill="#fbe08c"/><rect x="7" y="12" width="10" height="8" fill="#3f9be0"/><rect x="9.500" y="16" width="5" height="4" fill="#fbe08c"/></svg>
<svg style="left:552px;top:1048px;" width="24" height="24" viewBox="0 0 24 24"><ellipse cx="9" cy="5" rx="7" ry="3" fill="#f7c85c"/><path d="M2 5v11q0 3 7 3t7-3v-11" fill="#eeb03e"/><ellipse cx="9" cy="5" rx="7" ry="3" fill="#fbdb8a"/><path d="M14 22l8-8M15 14l7 8" stroke="#8a93ad" stroke-width="2.500"/><path d="M1 17v5h5M23 6v-5h-5" stroke="#6fae6a" stroke-width="1.300" fill="none"/></svg>
<svg style="left:601px;top:1047px;" width="26" height="24" viewBox="0 0 26 24"><path d="M7 1h17l-4 21h-18z" fill="#7fa9cc"/><path d="M8.500 4h13.500l-3 15h-14z" fill="#cfe3f3"/><path d="M12 4h10l-3 15h-6z" fill="#e6f1fa"/><path d="M7 1h17l-.700 3.500h-17z" fill="#7fb0d8"/><path d="M3 21l3 1.500h15l-1-1.500" fill="#6f9cc4"/></svg>
<svg style="left:648px;top:1048px;" width="28" height="24" viewBox="0 0 28 24"><path d="M13 1l-9 19h9z" fill="#f0a52e"/><path d="M15 5l8 15h-8z" fill="#4d8fd0"/><path d="M20 11l6 10h-6z" fill="#e8c04a"/><path d="M2 22h25" stroke="#5f6f96" stroke-width="1.200"/></svg>
<svg style="left:699px;top:1048px;" width="24" height="24" viewBox="0 0 24 24"><rect x="0" y="0" width="24" height="24" fill="#d6ebfa"/><rect x="3" y="15" width="4" height="7" fill="#1f66b8"/><rect x="9" y="11" width="4" height="11" fill="#1f66b8"/><rect x="15" y="6" width="4" height="16" fill="#1f66b8"/><path d="M5 11l13-8M18 3h-4M18 3v4" stroke="#1f66b8" stroke-width="1.600" fill="none"/></svg>
<svg style="left:701px;top:1049px;" width="7" height="7" viewBox="0 0 7 7"><rect x="0" y="0" width="7" height="7" fill="#d6ebfa" stroke="#1f66b8" stroke-width=".800"/><path d="M2 1.500l2.500 2-2.500 2" stroke="#1f66b8" fill="none"/></svg>
<svg style="left:748px;top:1048px;" width="24" height="24" viewBox="0 0 24 24"><rect x="0" y="0" width="24" height="24" fill="#d6ebfa"/><rect x="3" y="15" width="4" height="7" fill="#1f66b8"/><rect x="9" y="11" width="4" height="11" fill="#1f66b8"/><rect x="15" y="6" width="4" height="16" fill="#1f66b8"/><path d="M5 11l13-8M18 3h-4M18 3v4" stroke="#1f66b8" stroke-width="1.600" fill="none"/></svg>
<svg style="left:749px;top:1048px;" width="8" height="8" viewBox="0 0 8 8"><rect x="0" y="0" width="8" height="8" fill="#16305e"/><path d="M2.500 2l2.500 2-2.500 2" stroke="#fff" fill="none"/></svg>
<svg style="left:797px;top:1048px;" width="24" height="24" viewBox="0 0 24 24"><rect x="0" y="0" width="24" height="24" fill="#e3f1fc"/><rect x="3" y="15" width="4" height="7" fill="#1f66b8"/><rect x="9" y="11" width="4" height="11" fill="#1f66b8"/><rect x="15" y="6" width="4" height="16" fill="#1f66b8"/><path d="M5 11l13-8M18 3h-4M18 3v4" stroke="#1f66b8" stroke-width="1.600" fill="none"/></svg>
<svg style="left:846px;top:1048px;" width="24" height="24" viewBox="0 0 24 24"><rect x="0" y="0" width="24" height="22" fill="#e9e6e0"/><rect x="0" y="0" width="24" height="4" fill="#cfc6d6"/><path d="M4 22l5-14 4 14z" fill="#e0873a"/><path d="M10 22l5-12 4 12z" fill="#6a9a62"/><path d="M15 22l4-9 3 9z" fill="#4d7fc0"/></svg>
<svg style="left:895px;top:1048px;" width="24" height="24" viewBox="0 0 24 24"><rect x="0" y="0" width="24" height="24" fill="#142d63"/><rect x="3" y="15" width="4" height="7" fill="#ffffff"/><rect x="9" y="11" width="4" height="11" fill="#ffffff"/><rect x="15" y="6" width="4" height="16" fill="#ffffff"/><path d="M5 11l13-8M18 3h-4M18 3v4" stroke="#ffffff" stroke-width="1.600" fill="none"/></svg>
<div style="left:933px;top:1040px;width:48px;height:40px;background:#3b3f4d"></div>
<svg style="left:944px;top:1048px;" width="24" height="24" viewBox="0 0 24 24"><rect x="0" y="0" width="24" height="24" fill="#e8682c"/><text x="12" y="10" font-size="8" font-weight="bold" fill="#ffe3c0" text-anchor="middle" font-family="Liberation Sans,sans-serif">For</text><text x="12" y="20" font-size="10" font-weight="bold" fill="#ffef9a" text-anchor="middle" font-family="Liberation Sans,sans-serif">NAV</text></svg>
<div style="left:495px;top:1078px;width:40px;height:2px;background:#8fb5e6"></div>
<div style="left:643px;top:1078px;width:40px;height:2px;background:#8fb5e6"></div>
<div style="left:790px;top:1078px;width:40px;height:2px;background:#8fb5e6"></div>
<div style="left:838px;top:1078px;width:40px;height:2px;background:#8fb5e6"></div>
<div style="left:886px;top:1078px;width:41px;height:2px;background:#8fb5e6"></div>
<div style="left:935px;top:1078px;width:45px;height:2px;background:#8fb5e6"></div>
<svg style="left:1697px;top:1050px;" width="20" height="20" viewBox="0 0 20 20"><circle cx="7" cy="8" r="3" fill="none" stroke="#fff" stroke-width="1.300"/><path d="M1.500 18q0-6 5.500-6" stroke="#fff" stroke-width="1.300" fill="none"/><circle cx="14" cy="5" r="2.500" fill="none" stroke="#fff" stroke-width="1.300"/><path d="M10 12.500q1-4 4-4t4.500 4" stroke="#fff" stroke-width="1.300" fill="none"/></svg>
<svg style="left:1736px;top:1056px;" width="13" height="8" viewBox="0 0 13 8"><path d="M1 7l5.500-5.500 5.500 5.500" stroke="#fff" stroke-width="1.400" fill="none"/></svg>
<svg style="left:1758px;top:1052px;" width="18" height="16" viewBox="0 0 18 16"><rect x="5.500" y="1.500" width="11" height="8" fill="none" stroke="#fff" stroke-width="1.200"/><path d="M11 9.500v3M7 13.500h8" stroke="#fff" stroke-width="1.200"/><rect x="0.500" y="3.500" width="4" height="9" fill="#0d101b" stroke="#fff" stroke-width="1.200"/></svg>
<svg style="left:1782px;top:1053px;" width="18" height="14" viewBox="0 0 18 14"><path d="M1 5h3l4-4v12l-4-4h-3z" fill="none" stroke="#fff" stroke-width="1.200"/><path d="M11 4.500l5 5M16 4.500l-5 5" stroke="#fff" stroke-width="1.200"/></svg>
<div class="t c" style="left:1794px;top:1043px;width:80px;font-size:12px;color:#fff;letter-spacing:-0.1px">11:29 AM</div>
<div class="t c" style="left:1794px;top:1061px;width:80px;font-size:12px;color:#fff;letter-spacing:-0.1px">3/14/2019</div>
<svg style="left:1879px;top:1051px;" width="24" height="24" viewBox="0 0 24 24"><path d="M0 1h16v11h-9.500l-3.500 3.500v-3.500h-3z" fill="#fff"/><path d="M2.500 4h11M2.500 6.500h11M2.500 9h11" stroke="#0d101b" stroke-width="1.100"/><circle cx="16.500" cy="15.500" r="6.300" fill="#1a1d29" stroke="#8a8c94" stroke-width="1"/><text x="16.500" y="19.500" font-size="11" font-weight="bold" fill="#fff" text-anchor="middle" font-family="Liberation Sans,sans-serif">2</text></svg>
</body></html>
